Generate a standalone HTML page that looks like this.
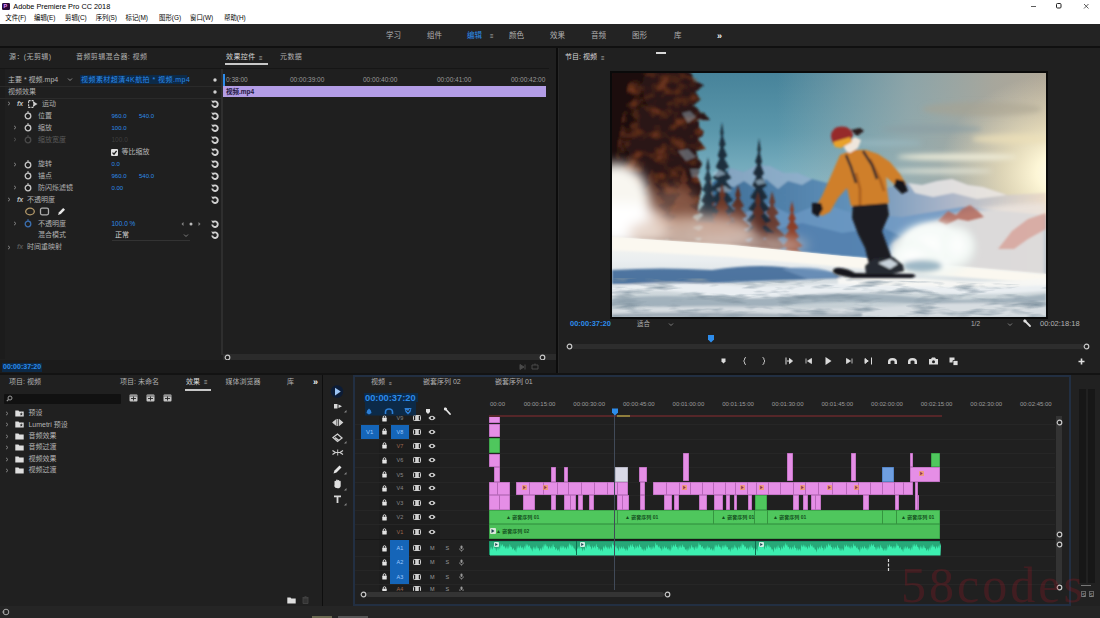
<!DOCTYPE html><html lang="zh-CN"><head><meta charset="utf-8"><title>Adobe Premiere Pro CC 2018</title><style>
*{margin:0;padding:0;box-sizing:border-box}
html,body{width:1100px;height:618px;overflow:hidden;background:#202020}
body{font-family:"Liberation Sans","Noto Sans CJK SC",sans-serif;font-size:7px;color:#b0b0b0;position:relative;line-height:1}
.a{position:absolute;white-space:nowrap}
.t{position:absolute;white-space:nowrap;line-height:10px;height:10px}
.b{color:#2d8ceb}
.d{color:#5a5a5a}
.w{color:#d8d8d8}
svg{position:absolute;overflow:visible}
</style></head><body>
<div class="a" style="left:0px;top:0px;width:1100px;height:24px;background:#ffffff;"></div>
<div class="a" style="left:1.5px;top:2.8px;width:8px;height:7px;background:#2a0a3a;border-radius:1.2px"></div>
<div class="t" style="left:3.600px;top:1.300px;font-size:5.500px;color:#e38cff;font-weight:bold">P</div>
<div class="t " style="left:13.3px;top:1.5px;color:#000;font-size:7.300px">Adobe Premiere Pro CC 2018</div>
<div class="t " style="left:5.3px;top:13.3px;color:#000;font-size:6.400px">文件(F)</div>
<div class="t " style="left:34px;top:13.3px;color:#000;font-size:6.400px">编辑(E)</div>
<div class="t " style="left:65px;top:13.3px;color:#000;font-size:6.400px">剪辑(C)</div>
<div class="t " style="left:95.7px;top:13.3px;color:#000;font-size:6.400px">序列(S)</div>
<div class="t " style="left:125.5px;top:13.3px;color:#000;font-size:6.400px">标记(M)</div>
<div class="t " style="left:159px;top:13.3px;color:#000;font-size:6.400px">图形(G)</div>
<div class="t " style="left:190px;top:13.3px;color:#000;font-size:6.400px">窗口(W)</div>
<div class="t " style="left:224px;top:13.3px;color:#000;font-size:6.400px">帮助(H)</div>
<svg style="left:1020px;top:0" width="80" height="12" viewBox="0 0 80 12"><path d="M11 6.5h5" stroke="#333" stroke-width="0.8" fill="none"/><rect x="36.5" y="3.5" width="4.5" height="4.5" rx="1" stroke="#222" stroke-width="1" fill="none"/><path d="M64 4l4.5 4.5M68.500 4l-4.5 4.500" stroke="#333" stroke-width="0.800" fill="none"/></svg>
<div class="a" style="left:0px;top:24px;width:1100px;height:23px;background:#232323;"></div>
<div class="a" style="left:0px;top:46px;width:1100px;height:1.5px;background:#101010;"></div>
<div class="t " style="left:386px;top:30.5px;font-size:7.5px">学习</div>
<div class="t " style="left:427px;top:30.5px;font-size:7.5px">组件</div>
<div class="t b" style="left:467px;top:30.5px;font-size:7.5px">编辑</div>
<div class="t " style="left:509px;top:30.5px;font-size:7.5px">颜色</div>
<div class="t " style="left:550px;top:30.5px;font-size:7.5px">效果</div>
<div class="t " style="left:591px;top:30.5px;font-size:7.5px">音频</div>
<div class="t " style="left:632px;top:30.5px;font-size:7.5px">图形</div>
<div class="t " style="left:674px;top:30.5px;font-size:7.5px">库</div>
<div class="t " style="left:490px;top:31px;font-size:6px">≡</div>
<div class="t w" style="left:717px;top:30.5px;font-size:9px;font-weight:bold;color:#f0f0f0">»</div>
<div class="a" style="left:0px;top:48px;width:556px;height:326px;background:#1f1f1f;"></div>
<div class="a" style="left:556px;top:48px;width:1.8px;height:326px;background:#0c0c0c;"></div>
<div class="a" style="left:557.8px;top:48px;width:1px;height:326px;background:#282828;"></div>
<div class="a" style="left:0px;top:69px;width:5px;height:290px;background:#1c1c1c;"></div>
<div class="t " style="left:9px;top:52px;font-size:7px;letter-spacing:0.400px">源：(无剪辑)</div>
<div class="t " style="left:76px;top:52px;font-size:7px;letter-spacing:0.400px">音频剪辑混合器: 视频</div>
<div class="t w" style="left:226px;top:52px;font-size:7px;letter-spacing:0.400px">效果控件</div>
<div class="t " style="left:259px;top:52.5px;font-size:6px">≡</div>
<div class="a" style="left:225px;top:63px;width:43px;height:1.5px;background:#c8c8c8;"></div>
<div class="t " style="left:280px;top:52px;font-size:7px;letter-spacing:0.400px">元数据</div>
<div class="a" style="left:0px;top:68px;width:549px;height:1px;background:#161616;"></div>
<div class="t " style="left:8px;top:74.5px;font-size:7px;color:#b8b8b8">主要 * 视频.mp4</div>
<svg style="left:67px;top:77px" width="6" height="5" viewBox="0 0 6 5"><path d="M1 1.500l2 2 2-2" stroke="#999" stroke-width="0.900" fill="none"/></svg>
<div class="a" style="left:80px;top:75px;width:107px;height:9px;background:#0c2a48;"></div>
<div class="t b" style="left:81px;top:74.5px;font-size:7px;letter-spacing:0.45px">视频素材超清4K航拍 * 视频.mp4</div>
<div class="t " style="left:8px;top:86.5px;font-size:7px;color:#b0b0b0">视频效果</div>
<div class="a" style="left:0px;top:85.5px;width:222px;height:0.8px;background:#2a2a2a;"></div>
<div class="a" style="left:0px;top:97.5px;width:222px;height:0.8px;background:#2a2a2a;"></div>
<div class="a" style="left:221px;top:69px;width:2px;height:286px;background:#2e2e2e;"></div>
<div class="a" style="left:223px;top:69px;width:333px;height:286px;background:#1f1f1f;"></div>
<div class="t " style="left:224px;top:74.5px;font-size:6.5px;color:#9a9a9a;left:226px">0:38:00</div>
<div class="t " style="left:290px;top:74.5px;font-size:6.5px;color:#9a9a9a">00:00:39:00</div>
<div class="t " style="left:363px;top:74.5px;font-size:6.5px;color:#9a9a9a">00:00:40:00</div>
<div class="t " style="left:437px;top:74.5px;font-size:6.5px;color:#9a9a9a">00:00:41:00</div>
<div class="t " style="left:511px;top:74.5px;font-size:6.5px;color:#9a9a9a">00:00:42:00</div>
<div class="a" style="left:223px;top:74px;width:1.5px;height:12px;background:#2d8ceb;"></div>
<div class="a" style="left:223px;top:86px;width:323px;height:11px;background:#b39de6;"></div>
<div class="t " style="left:226px;top:86.5px;font-size:6.5px;color:#1c143c;font-weight:bold">视频.mp4</div>
<svg style="left:212px;top:76.5px" width="6" height="6"><circle cx="3" cy="3" r="1.700" fill="#d0d0d0"/></svg>
<svg style="left:212px;top:88.5px" width="6" height="6"><circle cx="3" cy="3" r="1.700" fill="#d0d0d0"/></svg>
<svg style="left:211px;top:99.7px" width="8" height="8" viewBox="0 0 8 8"><path d="M2 2.200A2.800 2.800 0 1 1 1.200 4.500" stroke="#d0d0d0" stroke-width="1.900" fill="none"/><path d="M0.200 0.600l3.200 0.300-1.300 2.700z" fill="#d0d0d0"/></svg>
<svg style="left:211px;top:111.7px" width="8" height="8" viewBox="0 0 8 8"><path d="M2 2.200A2.800 2.800 0 1 1 1.200 4.500" stroke="#d0d0d0" stroke-width="1.900" fill="none"/><path d="M0.200 0.600l3.200 0.300-1.300 2.700z" fill="#d0d0d0"/></svg>
<svg style="left:211px;top:123.8px" width="8" height="8" viewBox="0 0 8 8"><path d="M2 2.200A2.800 2.800 0 1 1 1.200 4.500" stroke="#d0d0d0" stroke-width="1.900" fill="none"/><path d="M0.200 0.600l3.200 0.300-1.300 2.700z" fill="#d0d0d0"/></svg>
<svg style="left:211px;top:135.6px" width="8" height="8" viewBox="0 0 8 8"><path d="M2 2.200A2.800 2.800 0 1 1 1.200 4.500" stroke="#d0d0d0" stroke-width="1.900" fill="none"/><path d="M0.200 0.600l3.200 0.300-1.300 2.700z" fill="#d0d0d0"/></svg>
<svg style="left:211px;top:148.2px" width="8" height="8" viewBox="0 0 8 8"><path d="M2 2.200A2.800 2.800 0 1 1 1.200 4.500" stroke="#d0d0d0" stroke-width="1.900" fill="none"/><path d="M0.200 0.600l3.200 0.300-1.300 2.700z" fill="#d0d0d0"/></svg>
<svg style="left:211px;top:160px" width="8" height="8" viewBox="0 0 8 8"><path d="M2 2.200A2.800 2.800 0 1 1 1.200 4.500" stroke="#d0d0d0" stroke-width="1.900" fill="none"/><path d="M0.200 0.600l3.200 0.300-1.300 2.700z" fill="#d0d0d0"/></svg>
<svg style="left:211px;top:171.9px" width="8" height="8" viewBox="0 0 8 8"><path d="M2 2.200A2.800 2.800 0 1 1 1.200 4.500" stroke="#d0d0d0" stroke-width="1.900" fill="none"/><path d="M0.200 0.600l3.200 0.300-1.300 2.700z" fill="#d0d0d0"/></svg>
<svg style="left:211px;top:183.8px" width="8" height="8" viewBox="0 0 8 8"><path d="M2 2.200A2.800 2.800 0 1 1 1.200 4.500" stroke="#d0d0d0" stroke-width="1.900" fill="none"/><path d="M0.200 0.600l3.200 0.300-1.300 2.700z" fill="#d0d0d0"/></svg>
<svg style="left:211px;top:195.7px" width="8" height="8" viewBox="0 0 8 8"><path d="M2 2.200A2.800 2.800 0 1 1 1.200 4.500" stroke="#d0d0d0" stroke-width="1.900" fill="none"/><path d="M0.200 0.600l3.200 0.300-1.300 2.700z" fill="#d0d0d0"/></svg>
<svg style="left:211px;top:219.5px" width="8" height="8" viewBox="0 0 8 8"><path d="M2 2.200A2.800 2.800 0 1 1 1.200 4.500" stroke="#d0d0d0" stroke-width="1.900" fill="none"/><path d="M0.200 0.600l3.200 0.300-1.300 2.700z" fill="#d0d0d0"/></svg>
<svg style="left:211px;top:231.4px" width="8" height="8" viewBox="0 0 8 8"><path d="M2 2.200A2.800 2.800 0 1 1 1.200 4.500" stroke="#d0d0d0" stroke-width="1.900" fill="none"/><path d="M0.200 0.600l3.200 0.300-1.300 2.700z" fill="#d0d0d0"/></svg>
<svg style="left:7px;top:101.2px" width="4" height="5" viewBox="0 0 4 5"><path d="M1 0.800l2 1.700-2 1.700" stroke="#8a8a8a" stroke-width="0.900" fill="none"/></svg>
<div class="t " style="left:17px;top:98.7px;font-size:7px;font-style:italic;font-weight:bold;color:#c0c0c0">fx</div>
<svg style="left:28px;top:99.7px" width="10" height="8" viewBox="0 0 10 8"><rect x="0.600" y="0.600" width="5" height="6.800" stroke="#d0d0d0" stroke-width="1.100" fill="none" stroke-dasharray="2 1"/><path d="M5.500 1.500L9.500 4 5.500 6.500z" fill="#d0d0d0"/></svg>
<div class="t " style="left:42px;top:98.7px;color:#b0b0b0">运动</div>
<svg style="left:23.5px;top:111.2px" width="8" height="9" viewBox="0 0 8 9"><circle cx="4" cy="5" r="2.800" stroke="#c8c8c8" stroke-width="1.300" fill="none"/><path d="M3 1h2" stroke="#c8c8c8" stroke-width="1.100"/></svg>
<div class="t " style="left:38px;top:110.7px;">位置</div>
<div class="t b" style="left:111.5px;top:110.7px;font-size:6px">960.0</div>
<div class="t b" style="left:139px;top:110.7px;font-size:6px">540.0</div>
<svg style="left:13px;top:125.3px" width="4" height="5" viewBox="0 0 4 5"><path d="M1 0.800l2 1.700-2 1.700" stroke="#8a8a8a" stroke-width="0.900" fill="none"/></svg>
<svg style="left:23.5px;top:123.3px" width="8" height="9" viewBox="0 0 8 9"><circle cx="4" cy="5" r="2.800" stroke="#c8c8c8" stroke-width="1.300" fill="none"/><path d="M3 1h2" stroke="#c8c8c8" stroke-width="1.100"/></svg>
<div class="t " style="left:38px;top:122.8px;">缩放</div>
<div class="t b" style="left:111.5px;top:122.8px;font-size:6px">100.0</div>
<svg style="left:13px;top:137.1px" width="4" height="5" viewBox="0 0 4 5"><path d="M1 0.800l2 1.700-2 1.700" stroke="#555" stroke-width="0.900" fill="none"/></svg>
<svg style="left:23.5px;top:135.1px" width="8" height="9" viewBox="0 0 8 9"><circle cx="4" cy="5" r="2.800" stroke="#4a4a4a" stroke-width="1.300" fill="none"/><path d="M3 1h2" stroke="#4a4a4a" stroke-width="1.100"/></svg>
<div class="t d" style="left:38px;top:134.6px;">缩放宽度</div>
<div class="t " style="left:111.5px;top:134.6px;font-size:6.5px;color:#3e3e3e">100.0</div>
<div class="a" style="left:111px;top:148.7px;width:7px;height:7px;background:#e0e0e0;border-radius:1px"></div>
<svg style="left:111px;top:148.7px" width="7" height="7" viewBox="0 0 7 7"><path d="M1.500 3.600l1.500 1.600 2.600-3.400" stroke="#1a1a1a" stroke-width="1.300" fill="none"/></svg>
<div class="t " style="left:121.5px;top:147.2px;color:#b8b8b8">等比缩放</div>
<svg style="left:13px;top:161.5px" width="4" height="5" viewBox="0 0 4 5"><path d="M1 0.800l2 1.700-2 1.700" stroke="#8a8a8a" stroke-width="0.900" fill="none"/></svg>
<svg style="left:23.5px;top:159.5px" width="8" height="9" viewBox="0 0 8 9"><circle cx="4" cy="5" r="2.800" stroke="#c8c8c8" stroke-width="1.300" fill="none"/><path d="M3 1h2" stroke="#c8c8c8" stroke-width="1.100"/></svg>
<div class="t " style="left:38px;top:159px;">旋转</div>
<div class="t b" style="left:111.5px;top:159px;font-size:6px">0.0</div>
<svg style="left:23.5px;top:171.4px" width="8" height="9" viewBox="0 0 8 9"><circle cx="4" cy="5" r="2.800" stroke="#c8c8c8" stroke-width="1.300" fill="none"/><path d="M3 1h2" stroke="#c8c8c8" stroke-width="1.100"/></svg>
<div class="t " style="left:38px;top:170.9px;">锚点</div>
<div class="t b" style="left:111.5px;top:170.9px;font-size:6px">960.0</div>
<div class="t b" style="left:139px;top:170.9px;font-size:6px">540.0</div>
<svg style="left:13px;top:185.3px" width="4" height="5" viewBox="0 0 4 5"><path d="M1 0.800l2 1.700-2 1.700" stroke="#8a8a8a" stroke-width="0.900" fill="none"/></svg>
<svg style="left:23.5px;top:183.3px" width="8" height="9" viewBox="0 0 8 9"><circle cx="4" cy="5" r="2.800" stroke="#c8c8c8" stroke-width="1.300" fill="none"/><path d="M3 1h2" stroke="#c8c8c8" stroke-width="1.100"/></svg>
<div class="t " style="left:38px;top:182.8px;">防闪烁滤镜</div>
<div class="t b" style="left:111.5px;top:182.8px;font-size:6px">0.00</div>
<svg style="left:7px;top:197.2px" width="4" height="5" viewBox="0 0 4 5"><path d="M1 0.800l2 1.700-2 1.700" stroke="#8a8a8a" stroke-width="0.900" fill="none"/></svg>
<div class="t " style="left:17px;top:194.7px;font-size:7px;font-style:italic;font-weight:bold;color:#c0c0c0">fx</div>
<div class="t " style="left:27px;top:194.7px;color:#b0b0b0">不透明度</div>
<svg style="left:24px;top:207.0px" width="46" height="9" viewBox="0 0 46 9"><ellipse cx="6" cy="4.500" rx="4.300" ry="3.300" stroke="#b49a6a" stroke-width="1.300" fill="none"/><rect x="16.500" y="1.200" width="8" height="6.600" rx="1.500" stroke="#b0b0b0" stroke-width="1.300" fill="none"/><path d="M34 8l1-2.800 4.200-4.200 1.800 1.800-4.200 4.200z" fill="#e8e8e8"/></svg>
<svg style="left:13px;top:221.0px" width="4" height="5" viewBox="0 0 4 5"><path d="M1 0.800l2 1.700-2 1.700" stroke="#8a8a8a" stroke-width="0.900" fill="none"/></svg>
<svg style="left:23.5px;top:219.0px" width="8" height="9" viewBox="0 0 8 9"><circle cx="4" cy="5" r="2.800" stroke="#3b6fb0" stroke-width="1.300" fill="none"/><path d="M3 1h2" stroke="#3b6fb0" stroke-width="1.100"/></svg>
<div class="t " style="left:38px;top:218.5px;">不透明度</div>
<div class="t b" style="left:111.5px;top:218.5px;font-size:6.500px">100.0 %</div>
<svg style="left:180px;top:220.5px" width="24" height="6" viewBox="0 0 24 6"><path d="M3.500 1L1.500 3l2 2z" fill="#888"/><circle cx="11" cy="3" r="1.500" fill="#bbb"/><path d="M18.500 1l2 2-2 2z" fill="#888"/></svg>
<div class="t " style="left:38px;top:230.4px;">混合模式</div>
<div class="t w" style="left:115px;top:230.4px;">正常</div>
<div class="a" style="left:112px;top:239.9px;width:78px;height:0.8px;background:#333;"></div>
<svg style="left:183px;top:233.4px" width="6" height="5" viewBox="0 0 6 5"><path d="M1 1.500l2 2 2-2" stroke="#888" stroke-width="0.900" fill="none"/></svg>
<svg style="left:7px;top:244.8px" width="4" height="5" viewBox="0 0 4 5"><path d="M1 0.800l2 1.700-2 1.700" stroke="#8a8a8a" stroke-width="0.900" fill="none"/></svg>
<div class="t " style="left:17px;top:242.3px;font-size:7px;font-style:italic;font-weight:bold;color:#555">fx</div>
<div class="t " style="left:27px;top:242.3px;">时间重映射</div>
<div class="a" style="left:223px;top:354px;width:333px;height:6px;background:#2b2b2b;"></div>
<svg style="left:223.5px;top:353.5px" width="7" height="7"><circle cx="3.500" cy="3.500" r="2.300" stroke="#c8c8c8" stroke-width="1.200" fill="#1b1b1b"/></svg>
<svg style="left:539.0px;top:353.5px" width="7" height="7"><circle cx="3.500" cy="3.500" r="2.300" stroke="#c8c8c8" stroke-width="1.200" fill="#1b1b1b"/></svg>
<div class="a" style="left:0px;top:360px;width:556px;height:13px;background:#1b1b1b;z-index:0"></div>
<div class="a" style="left:0px;top:372.8px;width:1100px;height:1.8px;background:#131313;"></div>
<div class="a" style="left:2px;top:362.5px;width:40px;height:9px;background:#0c2a48;"></div>
<div class="t b" style="left:3px;top:362px;font-size:7px;font-weight:bold">00:00:37:20</div>
<svg style="left:518px;top:363px" width="24" height="8" viewBox="0 0 24 8"><path d="M2 1.500l4 2.500-4 2.500zM7 1.500v5" stroke="#4a4a4a" stroke-width="1" fill="#4a4a4a"/><path d="M14 2h6v4h-6zM17 2v-1.500" stroke="#4a4a4a" stroke-width="1" fill="none"/></svg>
<div class="a" style="left:559px;top:48px;width:541px;height:325px;background:#202020;"></div>
<div class="t w" style="left:565px;top:52px;font-size:7px">节目: 视频</div>
<div class="t " style="left:601px;top:52.5px;font-size:6px">≡</div>
<div class="a" style="left:656px;top:52px;width:10px;height:1.5px;background:#d8d8d8;"></div>
<div class="a" style="left:609.5px;top:70.5px;width:438px;height:248px;background:#0a0a0a;"></div>
<svg style="left:611.600px;top:72.500px;overflow:hidden" width="434" height="244" viewBox="0 0 434 244">
<defs>
<linearGradient id="sky" x1="0" y1="0" x2="0" y2="1"><stop offset="0" stop-color="#47839a"/><stop offset="0.250" stop-color="#5c98ac"/><stop offset="0.450" stop-color="#80b4c4"/><stop offset="0.650" stop-color="#9ccad4"/><stop offset="1" stop-color="#a8cfd6"/></linearGradient>
<linearGradient id="skyr" x1="0" y1="0" x2="1" y2="0"><stop offset="0.380" stop-color="#a4b4b4" stop-opacity="0"/><stop offset="0.680" stop-color="#a2aeac" stop-opacity="0.750"/><stop offset="0.880" stop-color="#aca89c" stop-opacity="0.950"/><stop offset="1" stop-color="#b0a898"/></linearGradient>
<radialGradient id="sun" cx="452" cy="100" r="125" gradientUnits="userSpaceOnUse" gradientTransform="translate(452 100) scale(1 0.800) translate(-452 -100)"><stop offset="0" stop-color="#fffdf4"/><stop offset="0.220" stop-color="#fff8d8" stop-opacity="0.980"/><stop offset="0.500" stop-color="#f8ecc4" stop-opacity="0.650"/><stop offset="1" stop-color="#ece0c0" stop-opacity="0"/></radialGradient>
<linearGradient id="mtn" x1="0" y1="0" x2="1" y2="0"><stop offset="0" stop-color="#3f6f98"/><stop offset="0.400" stop-color="#5f8fb8"/><stop offset="0.700" stop-color="#a9b4c8"/><stop offset="1" stop-color="#ecdcc8"/></linearGradient>
<linearGradient id="snow" x1="0" y1="0" x2="0" y2="1"><stop offset="0" stop-color="#f8f6f0"/><stop offset="0.300" stop-color="#eaeef0"/><stop offset="0.650" stop-color="#d2dade"/><stop offset="1" stop-color="#bcc8ce"/></linearGradient>
<radialGradient id="puff" cx="0.500" cy="0.500" r="0.500"><stop offset="0" stop-color="#ffffff"/><stop offset="0.600" stop-color="#f6fbf8" stop-opacity="0.920"/><stop offset="1" stop-color="#eaf4f0" stop-opacity="0"/></radialGradient>
<filter id="b1" x="-20%" y="-20%" width="140%" height="140%"><feGaussianBlur stdDeviation="0.800"/></filter>
<filter id="b2" x="-20%" y="-20%" width="140%" height="140%"><feGaussianBlur stdDeviation="2.500"/></filter>
<filter id="b5" x="-30%" y="-30%" width="160%" height="160%"><feGaussianBlur stdDeviation="6"/></filter>
<filter id="rough" x="-10%" y="-10%" width="120%" height="120%"><feTurbulence type="fractalNoise" baseFrequency="0.090" numOctaves="2" seed="3" result="n"/><feDisplacementMap in="SourceGraphic" in2="n" scale="9" xChannelSelector="R" yChannelSelector="G"/><feGaussianBlur stdDeviation="0.700"/></filter>
<filter id="snowtex" color-interpolation-filters="sRGB" x="0" y="0" width="100%" height="100%"><feTurbulence type="fractalNoise" baseFrequency="0.030 0.140" numOctaves="3" seed="5"/><feColorMatrix type="matrix" values="0 0 0 0 0.520  0 0 0 0 0.590  0 0 0 0 0.640  2.400 0 0 0 -1.150"/><feGaussianBlur stdDeviation="0.600"/></filter>
<filter id="treetex" color-interpolation-filters="sRGB" x="0" y="0" width="100%" height="100%"><feTurbulence type="fractalNoise" baseFrequency="0.070 0.090" numOctaves="3" seed="11"/><feColorMatrix type="matrix" values="0 0 0 0 0.440  0 0 0 0 0.210  0 0 0 0 0.110  3.200 0 0 0 -1.450"/><feGaussianBlur stdDeviation="0.800"/></filter>
<clipPath id="snowclip"><path d="M0 205L230 206 434 212V244H0z"/></clipPath>
<clipPath id="treeclip"><path d="M18 0h52l14 6 8 8-10 6 8 6-12 6 14 8 4 8-14 0 10 12-6 6 8 10-10 2 6 14-4 10 4 14-6 20-60 6-20-60z"/></clipPath>
</defs>
<rect width="434" height="244" fill="url(#sky)"/>
<rect width="434" height="244" fill="url(#skyr)"/>
<rect width="434" height="244" fill="url(#sun)"/>
<!-- clouds -->
<g filter="url(#b2)">
<ellipse cx="320" cy="56" rx="50" ry="4" fill="#8a9ea4" opacity="0.700"/>
<ellipse cx="370" cy="36" rx="60" ry="7" fill="#a8a290" opacity="0.500"/>
<ellipse cx="345" cy="84" rx="60" ry="3.500" fill="#f2f0dc" opacity="0.850"/>
<ellipse cx="330" cy="98" rx="50" ry="2.500" fill="#f2f2e2" opacity="0.700"/>
<ellipse cx="270" cy="70" rx="40" ry="3" fill="#9cbcc4" opacity="0.600"/>
<ellipse cx="400" cy="66" rx="40" ry="5" fill="#ecdfb8" opacity="0.700"/>
</g>
<!-- distant mountains -->
<g filter="url(#b1)">
<path d="M100 110L118 95 132 99 145 92 158 93 172 100 186 100 200 106 215 110 240 112 270 116 296 110 310 112 325 108 340 106 356 112 371 114 395 122 434 120V210H100z" fill="url(#mtn)"/>
<path d="M118 95l14 4 13-7 13 1 14 7 14 0 14 6-10 6-14-4-10 8-12-10-10 10-12-8-10 6-14-2z" fill="#d4e2ee" opacity="0.450"/>
<path d="M296 110l14 2 15-4 15-2 16 6 15 2 24 8-30 4-24-6-20 4-18-4z" fill="#f2ece6" opacity="0.750"/>
<path d="M120 150l30-22 30 14 30-12 30 10 50 4 60-10 84 8v60H120z" fill="#6c98c4" opacity="0.750"/>
<path d="M150 160l40-10 40 10 40-6 20 10-30 20H150z" fill="#4a78a8" opacity="0.650"/>
</g>
<path d="M280 170q60-40 154-40v80H280z" fill="#ece4de" opacity="0.850" filter="url(#b2)"/>
<!-- pink rocks right -->
<g filter="url(#b1)"><path d="M326 148l10-10 8 4 6-6 8-4 8 6 6 6-16 4-10-2-12 6z" fill="#b46a5c" opacity="0.850"/><path d="M386 176l14-18 16-12 18-6v16l-18 10-14 10z" fill="#d69488" opacity="0.650"/></g>
<!-- big trees left -->
<g filter="url(#b1)">
<g filter="url(#rough)"><path d="M-10 -10h80l14 16 8 8-10 6 8 6-12 6 14 8 4 8-14 0 10 12-6 6 8 10-10 2 6 14-4 10 4 14-6 20-10 30H-10z" fill="#2c1812"/>
<path d="M0 -10h40l-14 24 10 16-16 10 8 20-16 12 6 20-10 8H-10z" fill="#1a100d" opacity="0.900"/></g>
<g clip-path="url(#treeclip)"><rect x="0" y="0" width="110" height="170" filter="url(#treetex)"/></g>
<path d="M70 40l8-2 6 6-8 6zM66 78l10-2 8 8-10 4zM78 96l8 0 2 8-8 0z" fill="#9cb4c4" opacity="0.450"/>
<path d="M40.0 96.0L43.9 107.1L41.9 109.9L48.2 118.2L43.8 121.0L53.2 129.4L45.7 132.2L54.5 140.5L47.6 143.3L59.7 151.6L49.6 154.4L69.3 162.8L51.5 165.5L72.8 173.9L53.4 176.7L75.4 185.0L9.6 185.0L26.6 176.7L10.5 173.9L28.5 165.5L14.7 162.8L30.4 154.4L20.4 151.6L32.4 143.3L21.3 140.5L34.3 132.2L28.9 129.4L36.2 121.0L31.2 118.2L38.1 109.9L35.7 107.1z" fill="#4a2218" opacity="0.95"/>
<path d="M72.0 96.0L75.9 107.1L73.7 109.9L79.6 118.2L75.4 121.0L83.8 129.4L77.1 132.2L88.2 140.5L78.8 143.3L89.6 151.6L80.4 154.4L97.0 162.8L82.1 165.5L100.0 173.9L83.8 176.7L103.9 185.0L38.2 185.0L60.2 176.7L42.8 173.9L61.9 165.5L49.7 162.8L63.6 154.4L55.9 151.6L65.2 143.3L56.6 140.5L66.9 132.2L62.2 129.4L68.6 121.0L64.0 118.2L70.3 109.9L67.8 107.1z" fill="#5a2a1c" opacity="0.95"/>
<path d="M98.0 106.0L101.3 117.3L99.5 120.1L104.7 128.6L101.1 131.4L109.5 139.9L102.6 142.7L110.2 151.1L104.2 154.0L117.5 162.4L105.7 165.3L119.4 173.7L107.3 176.5L122.1 185.0L74.8 185.0L88.7 176.5L78.7 173.7L90.3 165.3L81.2 162.4L91.8 154.0L85.5 151.1L93.4 142.7L89.0 139.9L94.9 131.4L90.2 128.6L96.5 120.1L94.3 117.3z" fill="#6a3220" opacity="0.95"/>
<path d="M126.0 112.0L128.7 122.4L127.3 125.0L131.9 132.9L128.6 135.5L135.0 143.3L129.9 145.9L138.7 153.7L131.1 156.3L141.0 164.1L132.4 166.8L145.0 174.6L133.7 177.2L148.4 185.0L105.6 185.0L118.3 177.2L106.5 174.6L119.6 166.8L113.2 164.1L120.9 156.3L112.9 153.7L122.1 145.9L116.3 143.3L123.4 135.5L119.6 132.9L124.7 125.0L123.1 122.4z" fill="#5c2c20" opacity="0.95"/>
<path d="M160.0 118.0L163.2 129.2L161.3 132.0L166.6 140.3L162.7 143.1L168.4 151.5L164.1 154.3L173.3 162.7L165.4 165.5L173.1 173.8L166.8 176.6L177.5 185.0L143.9 185.0L153.2 176.6L143.6 173.8L154.6 165.5L146.2 162.7L155.9 154.3L152.2 151.5L157.3 143.1L153.9 140.3L158.7 132.0L157.3 129.2z" fill="#6a3424" opacity="0.9"/>
<path d="M110.0 49.0L111.6 60.2L110.8 63.0L113.7 71.4L111.5 74.2L115.2 82.7L112.2 85.5L117.1 93.9L113.0 96.7L119.3 105.1L113.8 107.9L120.0 116.3L114.5 119.1L121.0 127.6L115.2 130.4L123.7 138.8L116.0 141.6L123.6 150.0L95.4 150.0L104.0 141.6L98.5 138.8L104.8 130.4L99.8 127.6L105.5 119.1L98.5 116.3L106.2 107.9L100.5 105.1L107.0 96.7L103.7 93.9L107.8 85.5L105.7 82.7L108.5 74.2L107.1 71.4L109.2 63.0L108.2 60.2z" fill="#1a2e3c" opacity="1"/>
<path d="M147.0 65.0L148.8 76.9L147.8 79.8L150.0 88.8L148.6 91.7L152.0 100.6L149.4 103.6L154.8 112.5L150.2 115.5L155.6 124.4L150.9 127.3L158.0 136.2L151.7 139.2L159.5 148.1L152.5 151.1L162.9 160.0L133.0 160.0L141.5 151.1L134.3 148.1L142.3 139.2L136.2 136.2L143.1 127.3L138.2 124.4L143.8 115.5L140.3 112.5L144.6 103.6L141.0 100.6L145.4 91.7L143.1 88.8L146.2 79.8L145.4 76.9z" fill="#1a2c38" opacity="1"/>
<path d="M96.0 84.0L98.0 95.0L96.9 97.8L99.7 106.0L97.8 108.8L102.9 117.0L98.7 119.8L104.1 128.0L99.6 130.8L105.7 139.0L100.5 141.8L106.3 150.0L83.6 150.0L91.5 141.8L85.8 139.0L92.4 130.8L89.2 128.0L93.3 119.8L90.0 117.0L94.2 108.8L92.2 106.0L95.1 97.8L93.9 95.0z" fill="#1f3442" opacity="0.95"/>
<path d="M100 100l8-3 6 4-9 3zM104 116l9-3 7 5-11 2zM143 108l6-2 5 4-8 2z" fill="#b8d0e4" opacity="0.600"/>
<path d="M110.0 110.0L113.3 122.5L111.4 125.6L116.6 135.0L112.8 138.1L120.0 147.5L114.3 150.6L123.5 160.0L115.7 163.1L123.6 172.5L117.1 175.6L130.0 185.0L88.4 185.0L102.9 175.6L96.3 172.5L104.3 163.1L96.4 160.0L105.7 150.6L100.9 147.5L107.2 138.1L103.7 135.0L108.6 125.6L107.3 122.5z" fill="#6e3624" opacity="0.92"/>
<path d="M146.0 118.0L148.6 129.2L147.3 132.0L151.8 140.3L148.6 143.1L154.2 151.5L149.8 154.3L156.9 162.7L151.1 165.5L159.3 173.8L152.4 176.6L164.4 185.0L131.4 185.0L139.6 176.6L132.4 173.8L140.9 165.5L134.3 162.7L142.2 154.3L138.0 151.5L143.4 143.1L140.6 140.3L144.7 132.0L143.2 129.2z" fill="#5e3024" opacity="0.92"/>
<path d="M180.0 128.0L182.0 137.0L180.9 139.2L183.8 146.0L181.8 148.2L186.5 155.0L182.7 157.2L187.2 164.0L183.6 166.2L190.6 173.0L184.5 175.2L191.4 182.0L168.6 182.0L175.5 175.2L171.2 173.0L176.4 166.2L172.2 164.0L177.3 157.2L174.5 155.0L178.2 148.2L176.3 146.0L179.1 139.2L177.9 137.0z" fill="#8a3c28" opacity="1"/>
</g>
<!-- mist over trees -->
<g filter="url(#b5)">
<ellipse cx="4" cy="128" rx="34" ry="38" fill="#f8f6f0"/>
<ellipse cx="10" cy="152" rx="48" ry="22" fill="#ffffff" opacity="0.950"/>
<ellipse cx="80" cy="160" rx="64" ry="17" fill="#e2cec2" opacity="0.800"/>
<ellipse cx="140" cy="172" rx="56" ry="10" fill="#dccbc4" opacity="0.600"/>
<ellipse cx="62" cy="135" rx="26" ry="22" fill="#c89880" opacity="0.400"/>
<ellipse cx="110" cy="150" rx="30" ry="14" fill="#c8a090" opacity="0.350"/>
</g>
<!-- snow ground -->
<path d="M0 164L120 172 230 183 434 201V244H0z" fill="url(#snow)"/>
<path d="M0 164L120 172 230 183 434 201V211L230 194 120 184 0 177z" fill="#fbf8f0" filter="url(#b1)"/>
<g filter="url(#b1)">
<path d="M0 197q50-3 100 0 40-6 70-3t50 5l10 6q-40 2-80 3-80 4-150 3z" fill="#3f6898" opacity="0.900"/>
<path d="M170 196q30-4 50 3l6 5-30 2z" fill="#6f94bc" opacity="0.800"/>
<path d="M0 213q50-6 100-2t110 0 120 2 104-4v9q-60 5-120 2t-120 3-110-2-84 2z" fill="#eef2f6" opacity="0.850"/>
<path d="M0 226q40-5 90-2t100-2 110 2 134-3v7q-70 5-140 2t-130 3-164-2z" fill="#8e9fae" opacity="0.650"/>
<path d="M226 205q60-2 104 2t104-2v7q-50 3-100 2t-108-3z" fill="#f8f8f4" opacity="0.950"/>
<path d="M0 236q80-5 160-2t140-2 134 0v12H0z" fill="#dde2e6" opacity="0.750"/>
<path d="M0 241q60-3 130-1t120 0v4H0z" fill="#8c9aa6" opacity="0.700"/>
</g>
<g clip-path="url(#snowclip)"><rect x="0" y="200" width="434" height="44" filter="url(#snowtex)"/></g>
<!-- spray -->
<g filter="url(#b2)">
<ellipse cx="322" cy="176" rx="46" ry="32" fill="url(#puff)"/><ellipse cx="320" cy="172" rx="30" ry="22" fill="#ffffff" opacity="0.850"/>
<ellipse cx="318" cy="172" rx="34" ry="24" fill="url(#puff)"/>
<ellipse cx="300" cy="184" rx="28" ry="18" fill="url(#puff)"/>
<ellipse cx="346" cy="172" rx="20" ry="22" fill="url(#puff)" opacity="0.850"/>
<ellipse cx="310" cy="193" rx="20" ry="6" fill="#7fa0b4" opacity="0.750"/>
</g>
<!-- snowboarder -->
<g filter="url(#b1)">
<path d="M221 197q2-3 8-2 8 1 14 5l58 1 3 2-4 2h-60l-14-3q-6-2-5-5z" fill="#14161a"/>
<path d="M241 129l34-1 2 14-7 16 5 14 6 16-24 3-4-16-7-14-6-16z" fill="#1b1e24"/>
<path d="M253 193l8-7 20-2 10 8 1 6-12 3h-26z" fill="#262a30"/>
<path d="M266 190l12-4 8 5-8 5z" fill="#c8d2da"/>
<path d="M228 82l12-5 14 0 12 4 12 8 10 12 6 10-6 5-14-12 1 12 2 14-38 3-4-18-9 10-8 14-8 4-8-6 8-14 8-18z" fill="#cf7f2c"/>
<path d="M244 100l4 16 0 16M258 86l10 20 4 12" stroke="#a0561c" stroke-width="2.500" fill="none" opacity="0.800"/>
<path d="M234 82l5 12 5 16M251 78l9 14 5 14" stroke="#2a2a2e" stroke-width="2.400" fill="none"/>
<path d="M200 130l9 0 2 6-5 8-6-4z" fill="#15161a"/>
<path d="M284 106l8 2 4 10-6 3-8-8z" fill="#15161a"/>
<path d="M232 72q0 6 6 8l8-5 3-8-6-3z" fill="#efe6dc"/>
<path d="M219 64q0-10 10-10.500t12 8.500l-2 6-18 3z" fill="#962c2c"/>
<path d="M221 69l17-5 2 5-11 6-6-1z" fill="#e8a22a"/>
<path d="M239 57l9-2 4 3-7 5z" fill="#2a1c1c"/>
</g>
</svg>

<div class="t b" style="left:570px;top:318.5px;font-size:7.5px;font-weight:bold">00:00:37:20</div>
<div class="t " style="left:637px;top:318.5px;font-size:6.5px">适合</div>
<svg style="left:668px;top:321.500px" width="6" height="5" viewBox="0 0 6 5"><path d="M1 1.500l2 2 2-2" stroke="#888" stroke-width="0.900" fill="none"/></svg>
<div class="t " style="left:971px;top:318.5px;font-size:6.5px">1/2</div>
<svg style="left:1007px;top:321.500px" width="6" height="5" viewBox="0 0 6 5"><path d="M1 1.500l2 2 2-2" stroke="#888" stroke-width="0.900" fill="none"/></svg>
<svg style="left:1023px;top:319px" width="9" height="9" viewBox="0 0 9 9"><path d="M1.500 1.500l5.500 5.500" stroke="#e0e0e0" stroke-width="1.800" stroke-linecap="round"/><circle cx="2" cy="2" r="1.600" fill="#e0e0e0"/></svg>
<div class="t " style="left:1040px;top:318.5px;font-size:7.5px;color:#b4b4b4">00:02:18:18</div>
<svg style="left:707px;top:334px" width="8" height="9" viewBox="0 0 8 9"><path d="M1 1h6v4.500l-3 3-3-3z" fill="#2d8ceb"/></svg>
<div class="a" style="left:572px;top:344.3px;width:512px;height:4.5px;background:#2d2d2d;border-radius:2px"></div>
<svg style="left:565.5px;top:343.0px" width="7" height="7"><circle cx="3.500" cy="3.500" r="2.300" stroke="#c8c8c8" stroke-width="1.200" fill="#202020"/></svg>
<svg style="left:1083.0px;top:343.0px" width="7" height="7"><circle cx="3.500" cy="3.500" r="2.300" stroke="#c8c8c8" stroke-width="1.200" fill="#202020"/></svg>
<svg style="left:715px;top:355px" width="250" height="12" viewBox="715 355 250 12" fill="#dcdcdc" stroke="none"><path d="M721.500 358.500h4v3l-2 2-2-2z"/><path d="M746 357.500q-1.500 0-1.500 1.500v1l-1 1 1 1v1q0 1.500 1.500 1.500" stroke="#cfcfcf" stroke-width="0.900" fill="none"/><path d="M762.500 357.500q1.500 0 1.500 1.500v1l1 1-1 1v1q0 1.500-1.500 1.500" stroke="#cfcfcf" stroke-width="0.900" fill="none"/><path d="M786 357.500v7M787 361h2M789.500 358.500l3 2.500-3 2.500z" stroke="#dcdcdc" stroke-width="1"/><path d="M806 358.500v5M811.500 358.500v5l-4-2.500z" stroke="#dcdcdc" stroke-width="0.800"/><path d="M825.500 357l6 4-6 4z"/><path d="M852 358.500v5M846.500 358.500v5l4-2.500z" stroke="#dcdcdc" stroke-width="0.800"/><path d="M871.500 357.500v7M868.500 361h-2M865 358.500l3 2.500-3 2.500z" stroke="#dcdcdc" stroke-width="1"/><path d="M888 364v-2.500q0-3.500 4.500-3.500t4.500 3.500v2.500h-2.500v-2.500q0-1-2-1t-2 1v2.500z"/><path d="M908 364v-2.500q0-3.500 4.500-3.500t4.500 3.500v2.500h-2.500v-2.500q0-1-2-1t-2 1v2.500z"/><path d="M929 359h2l1-1.500h3l1 1.500h2v5.500h-9z"/><circle cx="933.500" cy="361.700" r="1.500" fill="#1d1d1d"/><path d="M949.500 357.500h5v5h-5z"/><path d="M953 360.500h5v5h-5z" stroke="#1d1d1d" stroke-width="0.800"/></svg>
<svg style="left:1078px;top:358px" width="7" height="7" viewBox="0 0 7 7"><path d="M3.500 0.500v6M0.500 3.500h6" stroke="#e0e0e0" stroke-width="1.600"/></svg>
<div class="a" style="left:0px;top:374.6px;width:322px;height:231px;background:#202020;"></div>
<div class="a" style="left:321.5px;top:374.6px;width:1.5px;height:231px;background:#0e0e0e;"></div>
<div class="t " style="left:9px;top:376.7px;font-size:7px">项目: 视频</div>
<div class="t " style="left:120px;top:376.7px;font-size:7px">项目: 未命名</div>
<div class="t w" style="left:186px;top:376.7px;font-size:7px">效果</div>
<div class="t " style="left:204px;top:377.2px;font-size:6px">≡</div>
<div class="a" style="left:185px;top:389px;width:26px;height:1.5px;background:#c8c8c8;"></div>
<div class="t " style="left:225.5px;top:376.7px;font-size:7px">媒体浏览器</div>
<div class="t " style="left:287px;top:376.7px;font-size:7px">库</div>
<div class="t w" style="left:313px;top:376.5px;font-size:9px;font-weight:bold;color:#f0f0f0">»</div>
<div class="a" style="left:4px;top:393.5px;width:117px;height:10px;background:#111111;border-radius:1px"></div>
<svg style="left:6px;top:395px" width="7" height="7" viewBox="0 0 7 7"><circle cx="4" cy="3" r="2" stroke="#999" stroke-width="1" fill="none"/><path d="M2.500 4.500L0.800 6.200" stroke="#999" stroke-width="1.100"/></svg>
<svg style="left:129.2px;top:394px" width="9" height="8" viewBox="0 0 9 8"><rect x="0.500" y="0.500" width="8" height="7" rx="1" fill="#c4c4c4"/><path d="M2 4.500h5M4.500 2.500v4" stroke="#222" stroke-width="0.900"/><path d="M0.500 2h8" stroke="#222" stroke-width="0.600"/></svg>
<svg style="left:145.9px;top:394px" width="9" height="8" viewBox="0 0 9 8"><rect x="0.500" y="0.500" width="8" height="7" rx="1" fill="#c4c4c4"/><path d="M2 4.500h5M4.500 2.500v4" stroke="#222" stroke-width="0.900"/><path d="M0.500 2h8" stroke="#222" stroke-width="0.600"/></svg>
<svg style="left:162.5px;top:394px" width="9" height="8" viewBox="0 0 9 8"><rect x="0.500" y="0.500" width="8" height="7" rx="1" fill="#c4c4c4"/><path d="M2 4.500h5M4.500 2.500v4" stroke="#222" stroke-width="0.900"/><path d="M0.500 2h8" stroke="#222" stroke-width="0.600"/></svg>
<svg style="left:5px;top:410.5px" width="4" height="5" viewBox="0 0 4 5"><path d="M1 0.800l2 1.700-2 1.700" stroke="#8a8a8a" stroke-width="0.900" fill="none"/></svg>
<svg style="left:15px;top:409.5px" width="9" height="7" viewBox="0 0 9 7"><path d="M0.300 0.500h3.200l0.800 1h4.400v5h-8.400z" fill="#dedede"/><path d="M6.300 2.300l0.500 1.100 1.100 0.100-0.800 0.800 0.200 1.100-1-0.500-1 0.500 0.200-1.100-0.800-0.800 1.100-0.100z" fill="#333"/></svg>
<div class="t " style="left:28.4px;top:408px;font-size:7px;color:#b4b4b4">预设</div>
<svg style="left:5px;top:422.2px" width="4" height="5" viewBox="0 0 4 5"><path d="M1 0.800l2 1.700-2 1.700" stroke="#8a8a8a" stroke-width="0.900" fill="none"/></svg>
<svg style="left:15px;top:421.2px" width="9" height="7" viewBox="0 0 9 7"><path d="M0.300 0.500h3.200l0.800 1h4.400v5h-8.400z" fill="#dedede"/><path d="M6.300 2.300l0.500 1.100 1.100 0.100-0.800 0.800 0.200 1.100-1-0.500-1 0.500 0.200-1.100-0.800-0.800 1.100-0.100z" fill="#333"/></svg>
<div class="t " style="left:28.4px;top:419.7px;font-size:7px;color:#b4b4b4">Lumetri 预设</div>
<svg style="left:5px;top:433.5px" width="4" height="5" viewBox="0 0 4 5"><path d="M1 0.800l2 1.700-2 1.700" stroke="#8a8a8a" stroke-width="0.900" fill="none"/></svg>
<svg style="left:15px;top:432.5px" width="9" height="7" viewBox="0 0 9 7"><path d="M0.300 0.500h3.200l0.800 1h4.400v5h-8.400z" fill="#dedede"/></svg>
<div class="t " style="left:28.4px;top:431px;font-size:7px;color:#b4b4b4">音频效果</div>
<svg style="left:5px;top:444.8px" width="4" height="5" viewBox="0 0 4 5"><path d="M1 0.800l2 1.700-2 1.700" stroke="#8a8a8a" stroke-width="0.900" fill="none"/></svg>
<svg style="left:15px;top:443.8px" width="9" height="7" viewBox="0 0 9 7"><path d="M0.300 0.500h3.200l0.800 1h4.400v5h-8.400z" fill="#dedede"/></svg>
<div class="t " style="left:28.4px;top:442.3px;font-size:7px;color:#b4b4b4">音频过渡</div>
<svg style="left:5px;top:456.5px" width="4" height="5" viewBox="0 0 4 5"><path d="M1 0.800l2 1.700-2 1.700" stroke="#8a8a8a" stroke-width="0.900" fill="none"/></svg>
<svg style="left:15px;top:455.5px" width="9" height="7" viewBox="0 0 9 7"><path d="M0.300 0.500h3.200l0.800 1h4.400v5h-8.400z" fill="#dedede"/></svg>
<div class="t " style="left:28.4px;top:454px;font-size:7px;color:#b4b4b4">视频效果</div>
<svg style="left:5px;top:467.8px" width="4" height="5" viewBox="0 0 4 5"><path d="M1 0.800l2 1.700-2 1.700" stroke="#8a8a8a" stroke-width="0.900" fill="none"/></svg>
<svg style="left:15px;top:466.8px" width="9" height="7" viewBox="0 0 9 7"><path d="M0.300 0.500h3.200l0.800 1h4.400v5h-8.400z" fill="#dedede"/></svg>
<div class="t " style="left:28.4px;top:465.3px;font-size:7px;color:#b4b4b4">视频过渡</div>
<svg style="left:287px;top:596.500px" width="9" height="7" viewBox="0 0 9 7"><path d="M0.300 0.500h3.200l0.800 1h4.400v5h-8.400z" fill="#dedede"/></svg>
<svg style="left:302px;top:596px" width="7" height="8" viewBox="0 0 7 8"><path d="M1 2h5v5.500h-5zM0.500 1.500h6M2.500 0.700h2" stroke="#444" stroke-width="0.900" fill="#333"/></svg>
<div class="a" style="left:323px;top:374.6px;width:30px;height:231px;background:#202020;"></div>
<svg style="left:330px;top:384px" width="16" height="124" viewBox="330 384 16 124"><circle cx="337" cy="391.500" r="6.300" fill="#0c1c36"/><path d="M335 387.800l5.800 3.800-5.800 3.800z" fill="#9cc4f4"/><path d="M334 404h3.500v4.500h-3.500zM338.500 404.500l3.500 1.800-3.500 1.800z" fill="#d8d8d8"/><path d="M333 422.500l3-2.500v5zM342.500 422.500l-3-2.500v5zM337.700 419v7" fill="#d0d0d0" stroke="#d0d0d0" stroke-width="1.100"/><path d="M333 437.500l4.500-3.500 4.500 4-4.500 3.500z" fill="none" stroke="#d0d0d0" stroke-width="1.300"/><path d="M335 437.600l4 3" stroke="#d0d0d0" stroke-width="1.400"/><path d="M332.500 450.500l3 2-3 2M343 450.500l-3 2 3 2M336 452.500h3.500" stroke="#d0d0d0" stroke-width="1.200" fill="none"/><path d="M337.700 449.500v6" stroke="#d0d0d0" stroke-width="0.900"/><path d="M333.500 473.500l1-3 5-5 2 2-5 5z" fill="#e6e6e6"/><path d="M334.500 484.500v-3q0-0.800 0.800-0.800t0.800 0.800v-1.200q0-0.800 0.800-0.800t0.800 0.800v0.400q0-0.800 0.800-0.800t0.800 0.800v0.800q0-0.700 0.700-0.700t0.700 0.700v4q0 2.800-3 2.800t-3.400-2z" fill="#e0e0e0"/><path d="M334 495.500h7v1.800h-2.600v5.700h-1.800v-5.700h-2.600z" fill="#d8d8d8"/></svg>
<svg style="left:343.500px;top:410px" width="3" height="3"><path d="M2.500 0v2.500h-2.500z" fill="#888"/></svg>
<svg style="left:343.500px;top:441px" width="3" height="3"><path d="M2.500 0v2.500h-2.500z" fill="#888"/></svg>
<svg style="left:343.500px;top:472px" width="3" height="3"><path d="M2.500 0v2.500h-2.500z" fill="#888"/></svg>
<svg style="left:343.500px;top:488px" width="3" height="3"><path d="M2.500 0v2.500h-2.500z" fill="#888"/></svg>
<svg style="left:343.500px;top:503px" width="3" height="3"><path d="M2.500 0v2.500h-2.500z" fill="#888"/></svg>
<div class="a" style="left:353px;top:374.6px;width:717.5px;height:231px;background:#202020;border:2px solid #222f42"></div>
<div class="t " style="left:371px;top:377px;font-size:7px">视频</div>
<div class="t " style="left:389px;top:377.5px;font-size:5px">≡</div>
<div class="t " style="left:423px;top:377px;font-size:7px">嵌套序列 02</div>
<div class="t " style="left:495px;top:377px;font-size:7px">嵌套序列 01</div>
<div class="a" style="left:364px;top:392.5px;width:54px;height:9.5px;background:#0c2a48;"></div>
<div class="t b" style="left:365px;top:392.5px;font-size:9.300px;font-weight:bold">00:00:37:20</div>
<div class="t " style="left:490px;top:398.7px;font-size:6px;color:#9c9c9c">00:00</div>
<div class="t " style="left:523.7px;top:398.7px;font-size:6px;color:#9c9c9c">00:00:15:00</div>
<div class="t " style="left:573.33px;top:398.7px;font-size:6px;color:#9c9c9c">00:00:30:00</div>
<div class="t " style="left:622.96px;top:398.7px;font-size:6px;color:#9c9c9c">00:00:45:00</div>
<div class="t " style="left:672.59px;top:398.7px;font-size:6px;color:#9c9c9c">00:01:00:00</div>
<div class="t " style="left:722.22px;top:398.7px;font-size:6px;color:#9c9c9c">00:01:15:00</div>
<div class="t " style="left:771.85px;top:398.7px;font-size:6px;color:#9c9c9c">00:01:30:00</div>
<div class="t " style="left:821.48px;top:398.7px;font-size:6px;color:#9c9c9c">00:01:45:00</div>
<div class="t " style="left:871.1100000000001px;top:398.7px;font-size:6px;color:#9c9c9c">00:02:00:00</div>
<div class="t " style="left:920.74px;top:398.7px;font-size:6px;color:#9c9c9c">00:02:15:00</div>
<div class="t " style="left:970.3700000000001px;top:398.7px;font-size:6px;color:#9c9c9c">00:02:30:00</div>
<div class="t " style="left:1020.0px;top:398.7px;font-size:6px;color:#9c9c9c">00:02:45:00</div>
<div class="a" style="left:379px;top:416px;width:61px;height:178px;background:#1d1d1d;"></div>
<div class="a" style="left:355px;top:424.3px;width:700px;height:0.8px;background:#262626;"></div>
<div class="a" style="left:355px;top:438.5px;width:700px;height:0.8px;background:#262626;"></div>
<div class="a" style="left:355px;top:452.6px;width:700px;height:0.8px;background:#262626;"></div>
<div class="a" style="left:355px;top:467px;width:700px;height:0.8px;background:#262626;"></div>
<div class="a" style="left:355px;top:481.5px;width:700px;height:0.8px;background:#262626;"></div>
<div class="a" style="left:355px;top:495.4px;width:700px;height:0.8px;background:#262626;"></div>
<div class="a" style="left:355px;top:510px;width:700px;height:0.8px;background:#262626;"></div>
<div class="a" style="left:355px;top:524px;width:700px;height:0.8px;background:#262626;"></div>
<div class="a" style="left:355px;top:538.5px;width:700px;height:0.8px;background:#262626;"></div>
<div class="a" style="left:355px;top:555.5px;width:700px;height:0.8px;background:#262626;"></div>
<div class="a" style="left:355px;top:569.5px;width:700px;height:0.8px;background:#262626;"></div>
<div class="a" style="left:355px;top:583.5px;width:700px;height:0.8px;background:#262626;"></div>
<div class="a" style="left:355px;top:539.3px;width:700px;height:1px;background:#171717;"></div>
<div class="a" style="left:360.7px;top:424.5px;width:18.7px;height:14px;background:#1565b8;"></div>
<div class="t " style="left:366px;top:426.5px;font-size:6px;color:#9cc8ff">V1</div>
<div class="a" style="left:390.6px;top:424.5px;width:18.1px;height:14px;background:#1565b8;"></div>
<svg style="left:382.2px;top:414.5px" width="5" height="7" viewBox="0 0 5 7"><path d="M1.200 3v-1q0-1.300 1.300-1.300t1.300 1.300v1" stroke="#e4e4e4" stroke-width="0.900" fill="none"/><rect x="0.300" y="2.800" width="4.400" height="3.700" rx="0.500" fill="#e4e4e4"/></svg>
<div class="t " style="left:396.5px;top:413px;font-size:5.500px;color:#8a8a8a">V9</div>
<svg style="left:412.7px;top:415px" width="8" height="6" viewBox="0 0 8 6"><rect x="0.500" y="0.500" width="7" height="5" rx="0.800" fill="none" stroke="#d0d0d0" stroke-width="1"/><rect x="2.200" y="0.500" width="3.600" height="5" fill="#d0d0d0"/></svg>
<svg style="left:428px;top:415px" width="8" height="6" viewBox="0 0 8 6"><path d="M0.400 3q3.600-4.400 7.200 0-3.600 4.400-7.200 0z" fill="#d4d4d4"/><circle cx="4" cy="3" r="1.300" fill="#1d1d1d"/></svg>
<svg style="left:382.2px;top:428.0px" width="5" height="7" viewBox="0 0 5 7"><path d="M1.200 3v-1q0-1.300 1.300-1.300t1.300 1.300v1" stroke="#e4e4e4" stroke-width="0.900" fill="none"/><rect x="0.300" y="2.800" width="4.400" height="3.700" rx="0.500" fill="#e4e4e4"/></svg>
<div class="t " style="left:396.5px;top:426.5px;font-size:5.500px;color:#9cc8ff">V8</div>
<svg style="left:412.7px;top:428.5px" width="8" height="6" viewBox="0 0 8 6"><rect x="0.500" y="0.500" width="7" height="5" rx="0.800" fill="none" stroke="#d0d0d0" stroke-width="1"/><rect x="2.200" y="0.500" width="3.600" height="5" fill="#d0d0d0"/></svg>
<svg style="left:428px;top:428.5px" width="8" height="6" viewBox="0 0 8 6"><path d="M0.400 3q3.600-4.400 7.200 0-3.600 4.400-7.200 0z" fill="#d4d4d4"/><circle cx="4" cy="3" r="1.300" fill="#1d1d1d"/></svg>
<svg style="left:382.2px;top:442.2px" width="5" height="7" viewBox="0 0 5 7"><path d="M1.200 3v-1q0-1.300 1.300-1.300t1.300 1.300v1" stroke="#e4e4e4" stroke-width="0.900" fill="none"/><rect x="0.300" y="2.800" width="4.400" height="3.700" rx="0.500" fill="#e4e4e4"/></svg>
<div class="t " style="left:396.5px;top:440.7px;font-size:5.500px;color:#a06a50">V7</div>
<svg style="left:412.7px;top:442.7px" width="8" height="6" viewBox="0 0 8 6"><rect x="0.500" y="0.500" width="7" height="5" rx="0.800" fill="none" stroke="#d0d0d0" stroke-width="1"/><rect x="2.200" y="0.500" width="3.600" height="5" fill="#d0d0d0"/></svg>
<svg style="left:428px;top:442.7px" width="8" height="6" viewBox="0 0 8 6"><path d="M0.400 3q3.600-4.400 7.200 0-3.600 4.400-7.200 0z" fill="#d4d4d4"/><circle cx="4" cy="3" r="1.300" fill="#1d1d1d"/></svg>
<svg style="left:382.2px;top:456.5px" width="5" height="7" viewBox="0 0 5 7"><path d="M1.200 3v-1q0-1.300 1.300-1.300t1.300 1.300v1" stroke="#e4e4e4" stroke-width="0.900" fill="none"/><rect x="0.300" y="2.800" width="4.400" height="3.700" rx="0.500" fill="#e4e4e4"/></svg>
<div class="t " style="left:396.5px;top:455px;font-size:5.500px;color:#8a8a8a">V6</div>
<svg style="left:412.7px;top:457px" width="8" height="6" viewBox="0 0 8 6"><rect x="0.500" y="0.500" width="7" height="5" rx="0.800" fill="none" stroke="#d0d0d0" stroke-width="1"/><rect x="2.200" y="0.500" width="3.600" height="5" fill="#d0d0d0"/></svg>
<svg style="left:428px;top:457px" width="8" height="6" viewBox="0 0 8 6"><path d="M0.400 3q3.600-4.400 7.200 0-3.600 4.400-7.200 0z" fill="#d4d4d4"/><circle cx="4" cy="3" r="1.300" fill="#1d1d1d"/></svg>
<svg style="left:382.2px;top:471.0px" width="5" height="7" viewBox="0 0 5 7"><path d="M1.200 3v-1q0-1.300 1.300-1.300t1.300 1.300v1" stroke="#e4e4e4" stroke-width="0.900" fill="none"/><rect x="0.300" y="2.800" width="4.400" height="3.700" rx="0.500" fill="#e4e4e4"/></svg>
<div class="t " style="left:396.5px;top:469.5px;font-size:5.500px;color:#8a8a8a">V5</div>
<svg style="left:412.7px;top:471.5px" width="8" height="6" viewBox="0 0 8 6"><rect x="0.500" y="0.500" width="7" height="5" rx="0.800" fill="none" stroke="#d0d0d0" stroke-width="1"/><rect x="2.200" y="0.500" width="3.600" height="5" fill="#d0d0d0"/></svg>
<svg style="left:428px;top:471.5px" width="8" height="6" viewBox="0 0 8 6"><path d="M0.400 3q3.600-4.400 7.200 0-3.600 4.400-7.200 0z" fill="#d4d4d4"/><circle cx="4" cy="3" r="1.300" fill="#1d1d1d"/></svg>
<svg style="left:382.2px;top:484.5px" width="5" height="7" viewBox="0 0 5 7"><path d="M1.200 3v-1q0-1.300 1.300-1.300t1.300 1.300v1" stroke="#e4e4e4" stroke-width="0.900" fill="none"/><rect x="0.300" y="2.800" width="4.400" height="3.700" rx="0.500" fill="#e4e4e4"/></svg>
<div class="t " style="left:396.5px;top:483px;font-size:5.500px;color:#8a8a8a">V4</div>
<svg style="left:412.7px;top:485px" width="8" height="6" viewBox="0 0 8 6"><rect x="0.500" y="0.500" width="7" height="5" rx="0.800" fill="none" stroke="#d0d0d0" stroke-width="1"/><rect x="2.200" y="0.500" width="3.600" height="5" fill="#d0d0d0"/></svg>
<svg style="left:428px;top:485px" width="8" height="6" viewBox="0 0 8 6"><path d="M0.400 3q3.600-4.400 7.200 0-3.600 4.400-7.200 0z" fill="#d4d4d4"/><circle cx="4" cy="3" r="1.300" fill="#1d1d1d"/></svg>
<svg style="left:382.2px;top:499.0px" width="5" height="7" viewBox="0 0 5 7"><path d="M1.200 3v-1q0-1.300 1.300-1.300t1.300 1.300v1" stroke="#e4e4e4" stroke-width="0.900" fill="none"/><rect x="0.300" y="2.800" width="4.400" height="3.700" rx="0.500" fill="#e4e4e4"/></svg>
<div class="t " style="left:396.5px;top:497.5px;font-size:5.500px;color:#8a8a8a">V3</div>
<svg style="left:412.7px;top:499.5px" width="8" height="6" viewBox="0 0 8 6"><rect x="0.500" y="0.500" width="7" height="5" rx="0.800" fill="none" stroke="#d0d0d0" stroke-width="1"/><rect x="2.200" y="0.500" width="3.600" height="5" fill="#d0d0d0"/></svg>
<svg style="left:428px;top:499.5px" width="8" height="6" viewBox="0 0 8 6"><path d="M0.400 3q3.600-4.400 7.200 0-3.600 4.400-7.200 0z" fill="#d4d4d4"/><circle cx="4" cy="3" r="1.300" fill="#1d1d1d"/></svg>
<svg style="left:382.2px;top:513.5px" width="5" height="7" viewBox="0 0 5 7"><path d="M1.200 3v-1q0-1.300 1.300-1.300t1.300 1.300v1" stroke="#e4e4e4" stroke-width="0.900" fill="none"/><rect x="0.300" y="2.800" width="4.400" height="3.700" rx="0.500" fill="#e4e4e4"/></svg>
<div class="t " style="left:396.5px;top:512px;font-size:5.500px;color:#8a8a8a">V2</div>
<svg style="left:412.7px;top:514px" width="8" height="6" viewBox="0 0 8 6"><rect x="0.500" y="0.500" width="7" height="5" rx="0.800" fill="none" stroke="#d0d0d0" stroke-width="1"/><rect x="2.200" y="0.500" width="3.600" height="5" fill="#d0d0d0"/></svg>
<svg style="left:428px;top:514px" width="8" height="6" viewBox="0 0 8 6"><path d="M0.400 3q3.600-4.400 7.200 0-3.600 4.400-7.200 0z" fill="#d4d4d4"/><circle cx="4" cy="3" r="1.300" fill="#1d1d1d"/></svg>
<svg style="left:382.2px;top:528.0px" width="5" height="7" viewBox="0 0 5 7"><path d="M1.200 3v-1q0-1.300 1.300-1.300t1.300 1.300v1" stroke="#e4e4e4" stroke-width="0.900" fill="none"/><rect x="0.300" y="2.800" width="4.400" height="3.700" rx="0.500" fill="#e4e4e4"/></svg>
<div class="t " style="left:396.5px;top:526.5px;font-size:5.500px;color:#a06a50">V1</div>
<svg style="left:412.7px;top:528.5px" width="8" height="6" viewBox="0 0 8 6"><rect x="0.500" y="0.500" width="7" height="5" rx="0.800" fill="none" stroke="#d0d0d0" stroke-width="1"/><rect x="2.200" y="0.500" width="3.600" height="5" fill="#d0d0d0"/></svg>
<svg style="left:428px;top:528.5px" width="8" height="6" viewBox="0 0 8 6"><path d="M0.400 3q3.600-4.400 7.200 0-3.600 4.400-7.200 0z" fill="#d4d4d4"/><circle cx="4" cy="3" r="1.300" fill="#1d1d1d"/></svg>
<div class="a" style="left:390.3px;top:539.8px;width:18.7px;height:44px;background:#1565b8;"></div>
<svg style="left:382.2px;top:544.5px" width="5" height="7" viewBox="0 0 5 7"><path d="M1.200 3v-1q0-1.300 1.300-1.300t1.300 1.300v1" stroke="#e4e4e4" stroke-width="0.900" fill="none"/><rect x="0.300" y="2.800" width="4.400" height="3.700" rx="0.500" fill="#e4e4e4"/></svg>
<div class="t " style="left:396.5px;top:543px;font-size:5.500px;color:#9cc8ff">A1</div>
<svg style="left:412.7px;top:545px" width="8" height="6" viewBox="0 0 8 6"><rect x="0.500" y="0.500" width="7" height="5" rx="0.800" fill="none" stroke="#d0d0d0" stroke-width="1"/><rect x="2.200" y="0.500" width="3.600" height="5" fill="#d0d0d0"/></svg>
<div class="t " style="left:430px;top:543px;font-size:5.500px;color:#9a9a9a">M</div>
<div class="t " style="left:445.5px;top:543px;font-size:5.500px;color:#9a9a9a">S</div>
<svg style="left:459px;top:544.5px" width="5" height="7" viewBox="0 0 5 7"><rect x="1.500" y="0.500" width="2" height="3.500" rx="1" fill="#9a9a9a"/><path d="M0.500 3.500q0 2 2 2t2-2M2.500 5.500v1.200" stroke="#9a9a9a" stroke-width="0.700" fill="none"/></svg>
<svg style="left:382.2px;top:558.5px" width="5" height="7" viewBox="0 0 5 7"><path d="M1.200 3v-1q0-1.300 1.300-1.300t1.300 1.300v1" stroke="#e4e4e4" stroke-width="0.900" fill="none"/><rect x="0.300" y="2.800" width="4.400" height="3.700" rx="0.500" fill="#e4e4e4"/></svg>
<div class="t " style="left:396.5px;top:557px;font-size:5.500px;color:#9cc8ff">A2</div>
<svg style="left:412.7px;top:559px" width="8" height="6" viewBox="0 0 8 6"><rect x="0.500" y="0.500" width="7" height="5" rx="0.800" fill="none" stroke="#d0d0d0" stroke-width="1"/><rect x="2.200" y="0.500" width="3.600" height="5" fill="#d0d0d0"/></svg>
<div class="t " style="left:430px;top:557px;font-size:5.500px;color:#9a9a9a">M</div>
<div class="t " style="left:445.5px;top:557px;font-size:5.500px;color:#9a9a9a">S</div>
<svg style="left:459px;top:558.5px" width="5" height="7" viewBox="0 0 5 7"><rect x="1.500" y="0.500" width="2" height="3.500" rx="1" fill="#9a9a9a"/><path d="M0.500 3.500q0 2 2 2t2-2M2.500 5.500v1.200" stroke="#9a9a9a" stroke-width="0.700" fill="none"/></svg>
<svg style="left:382.2px;top:573.0px" width="5" height="7" viewBox="0 0 5 7"><path d="M1.200 3v-1q0-1.300 1.300-1.300t1.300 1.300v1" stroke="#e4e4e4" stroke-width="0.900" fill="none"/><rect x="0.300" y="2.800" width="4.400" height="3.700" rx="0.500" fill="#e4e4e4"/></svg>
<div class="t " style="left:396.5px;top:571.5px;font-size:5.500px;color:#9cc8ff">A3</div>
<svg style="left:412.7px;top:573.5px" width="8" height="6" viewBox="0 0 8 6"><rect x="0.500" y="0.500" width="7" height="5" rx="0.800" fill="none" stroke="#d0d0d0" stroke-width="1"/><rect x="2.200" y="0.500" width="3.600" height="5" fill="#d0d0d0"/></svg>
<div class="t " style="left:430px;top:571.5px;font-size:5.500px;color:#9a9a9a">M</div>
<div class="t " style="left:445.5px;top:571.5px;font-size:5.500px;color:#9a9a9a">S</div>
<svg style="left:459px;top:573.0px" width="5" height="7" viewBox="0 0 5 7"><rect x="1.500" y="0.500" width="2" height="3.500" rx="1" fill="#9a9a9a"/><path d="M0.500 3.500q0 2 2 2t2-2M2.500 5.500v1.200" stroke="#9a9a9a" stroke-width="0.700" fill="none"/></svg>
<svg style="left:382.2px;top:585.5px" width="5" height="7" viewBox="0 0 5 7"><path d="M1.200 3v-1q0-1.300 1.300-1.300t1.300 1.300v1" stroke="#e4e4e4" stroke-width="0.900" fill="none"/><rect x="0.300" y="2.800" width="4.400" height="3.700" rx="0.500" fill="#e4e4e4"/></svg>
<div class="t " style="left:396.5px;top:584px;font-size:5.500px;color:#a06a50">A4</div>
<svg style="left:412.7px;top:586px" width="8" height="6" viewBox="0 0 8 6"><rect x="0.500" y="0.500" width="7" height="5" rx="0.800" fill="none" stroke="#d0d0d0" stroke-width="1"/><rect x="2.200" y="0.500" width="3.600" height="5" fill="#d0d0d0"/></svg>
<div class="t " style="left:430px;top:584px;font-size:5.500px;color:#9a9a9a">M</div>
<div class="t " style="left:445.5px;top:584px;font-size:5.500px;color:#9a9a9a">S</div>
<svg style="left:459px;top:585.5px" width="5" height="7" viewBox="0 0 5 7"><rect x="1.500" y="0.500" width="2" height="3.500" rx="1" fill="#9a9a9a"/><path d="M0.500 3.500q0 2 2 2t2-2M2.500 5.500v1.200" stroke="#9a9a9a" stroke-width="0.700" fill="none"/></svg>
<div class="a" style="left:379px;top:404px;width:61px;height:10.5px;background:#202020;"></div>
<div class="a" style="left:440px;top:404px;width:49px;height:10.5px;background:#202020;"></div>
<svg style="left:364px;top:406px" width="92" height="11" viewBox="364 406 92 11"><rect x="365" y="402" width="51" height="13.500" fill="#0c2a48"/><path d="M366.500 413q0-3 2.500-4.500 2.500 1.500 2.500 4.500l-2.500 1.500z" fill="#2d7fd6"/><path d="M385.500 414v-2q0-3 3.500-3t3.500 3v2" stroke="#2d7fd6" stroke-width="1.600" fill="none"/><path d="M404.500 408h7l-1 4-2.500 2.500-2.500-2.500z" fill="#2d7fd6"/><path d="M406.500 410l1.500 2 2-3" stroke="#1d1d1d" stroke-width="0.900" fill="none"/><path d="M426 409h4v3l-2 2-2-2z" fill="#e0e0e0"/><path d="M445 408.500l5 5.500" stroke="#e6e6e6" stroke-width="1.800" stroke-linecap="round"/><circle cx="445.500" cy="409" r="1.600" fill="#e6e6e6"/></svg>
<div class="a" style="left:488.8px;top:415.6px;width:11.2px;height:7.9px;background:#e58ee6;box-shadow:inset 0 0 0 0.5px #a45ca6"></div>
<div class="a" style="left:488.8px;top:423.5px;width:11.2px;height:13.3px;background:#e58ee6;box-shadow:inset 0 0 0 0.5px #a45ca6"></div>
<div class="a" style="left:488.8px;top:438.0px;width:11.2px;height:14.6px;background:#4fc75d;box-shadow:inset 0 0 0 0.5px #2f8a3c"></div>
<div class="a" style="left:488.8px;top:453.5px;width:11.2px;height:13.5px;background:#e58ee6;box-shadow:inset 0 0 0 0.5px #a45ca6"></div>
<div class="a" style="left:494.0px;top:467.0px;width:6.0px;height:14.5px;background:#e58ee6;box-shadow:inset 0 0 0 0.5px #a45ca6"></div>
<div class="a" style="left:489.3px;top:481.5px;width:20.4px;height:13.9px;background:#e58ee6;box-shadow:inset 0 0 0 0.5px #a45ca6"></div>
<div class="a" style="left:516.4px;top:481.5px;width:112.1px;height:13.9px;background:#e58ee6;box-shadow:inset 0 0 0 0.5px #a45ca6"></div>
<div class="a" style="left:653.0px;top:481.5px;width:259.5px;height:13.9px;background:#e58ee6;box-shadow:inset 0 0 0 0.5px #a45ca6"></div>
<div class="a" style="left:497px;top:481.5px;width:0.8px;height:13.9px;background:#b868ba;"></div>
<div class="a" style="left:529px;top:481.5px;width:0.8px;height:13.9px;background:#b868ba;"></div>
<div class="a" style="left:543px;top:481.5px;width:0.8px;height:13.9px;background:#b868ba;"></div>
<div class="a" style="left:557px;top:481.5px;width:0.8px;height:13.9px;background:#b868ba;"></div>
<div class="a" style="left:568px;top:481.5px;width:0.8px;height:13.9px;background:#b868ba;"></div>
<div class="a" style="left:581px;top:481.5px;width:0.8px;height:13.9px;background:#b868ba;"></div>
<div class="a" style="left:594px;top:481.5px;width:0.8px;height:13.9px;background:#b868ba;"></div>
<div class="a" style="left:607px;top:481.5px;width:0.8px;height:13.9px;background:#b868ba;"></div>
<div class="a" style="left:617px;top:481.5px;width:0.8px;height:13.9px;background:#b868ba;"></div>
<div class="a" style="left:666px;top:481.5px;width:0.8px;height:13.9px;background:#b868ba;"></div>
<div class="a" style="left:679px;top:481.5px;width:0.8px;height:13.9px;background:#b868ba;"></div>
<div class="a" style="left:690px;top:481.5px;width:0.8px;height:13.9px;background:#b868ba;"></div>
<div class="a" style="left:702px;top:481.5px;width:0.8px;height:13.9px;background:#b868ba;"></div>
<div class="a" style="left:713px;top:481.5px;width:0.8px;height:13.9px;background:#b868ba;"></div>
<div class="a" style="left:725px;top:481.5px;width:0.8px;height:13.9px;background:#b868ba;"></div>
<div class="a" style="left:735px;top:481.5px;width:0.8px;height:13.9px;background:#b868ba;"></div>
<div class="a" style="left:747px;top:481.5px;width:0.8px;height:13.9px;background:#b868ba;"></div>
<div class="a" style="left:756px;top:481.5px;width:0.8px;height:13.9px;background:#b868ba;"></div>
<div class="a" style="left:768px;top:481.5px;width:0.8px;height:13.9px;background:#b868ba;"></div>
<div class="a" style="left:780px;top:481.5px;width:0.8px;height:13.9px;background:#b868ba;"></div>
<div class="a" style="left:793px;top:481.5px;width:0.8px;height:13.9px;background:#b868ba;"></div>
<div class="a" style="left:805px;top:481.5px;width:0.8px;height:13.9px;background:#b868ba;"></div>
<div class="a" style="left:818px;top:481.5px;width:0.8px;height:13.9px;background:#b868ba;"></div>
<div class="a" style="left:832px;top:481.5px;width:0.8px;height:13.9px;background:#b868ba;"></div>
<div class="a" style="left:846px;top:481.5px;width:0.8px;height:13.9px;background:#b868ba;"></div>
<div class="a" style="left:858px;top:481.5px;width:0.8px;height:13.9px;background:#b868ba;"></div>
<div class="a" style="left:870px;top:481.5px;width:0.8px;height:13.9px;background:#b868ba;"></div>
<div class="a" style="left:882px;top:481.5px;width:0.8px;height:13.9px;background:#b868ba;"></div>
<div class="a" style="left:894px;top:481.5px;width:0.8px;height:13.9px;background:#b868ba;"></div>
<div class="a" style="left:903px;top:481.5px;width:0.8px;height:13.9px;background:#b868ba;"></div>
<div class="a" style="left:489.3px;top:495.4px;width:20.4px;height:14.6px;background:#e58ee6;box-shadow:inset 0 0 0 0.5px #a45ca6"></div>
<div class="a" style="left:523.0px;top:495.4px;width:12.0px;height:14.6px;background:#e58ee6;box-shadow:inset 0 0 0 0.5px #a45ca6"></div>
<div class="a" style="left:550.8px;top:495.4px;width:5.5px;height:14.6px;background:#e58ee6;box-shadow:inset 0 0 0 0.5px #a45ca6"></div>
<div class="a" style="left:563.9px;top:495.4px;width:12.1px;height:14.6px;background:#e58ee6;box-shadow:inset 0 0 0 0.5px #a45ca6"></div>
<div class="a" style="left:578.0px;top:495.4px;width:5.0px;height:14.6px;background:#e58ee6;box-shadow:inset 0 0 0 0.5px #a45ca6"></div>
<div class="a" style="left:589.0px;top:495.4px;width:5.0px;height:14.6px;background:#e58ee6;box-shadow:inset 0 0 0 0.5px #a45ca6"></div>
<div class="a" style="left:617.0px;top:495.4px;width:11.5px;height:14.6px;background:#e58ee6;box-shadow:inset 0 0 0 0.5px #a45ca6"></div>
<div class="a" style="left:640.0px;top:495.4px;width:4.5px;height:14.6px;background:#e58ee6;box-shadow:inset 0 0 0 0.5px #a45ca6"></div>
<div class="a" style="left:664.0px;top:495.4px;width:8.0px;height:14.6px;background:#e58ee6;box-shadow:inset 0 0 0 0.5px #a45ca6"></div>
<div class="a" style="left:673.6px;top:495.4px;width:5.0px;height:14.6px;background:#e58ee6;box-shadow:inset 0 0 0 0.5px #a45ca6"></div>
<div class="a" style="left:699.0px;top:495.4px;width:8.0px;height:14.6px;background:#e58ee6;box-shadow:inset 0 0 0 0.5px #a45ca6"></div>
<div class="a" style="left:714.0px;top:495.4px;width:9.0px;height:14.6px;background:#e58ee6;box-shadow:inset 0 0 0 0.5px #a45ca6"></div>
<div class="a" style="left:726.0px;top:495.4px;width:4.0px;height:14.6px;background:#e58ee6;box-shadow:inset 0 0 0 0.5px #a45ca6"></div>
<div class="a" style="left:734.0px;top:495.4px;width:3.0px;height:14.6px;background:#e58ee6;box-shadow:inset 0 0 0 0.5px #a45ca6"></div>
<div class="a" style="left:748.0px;top:495.4px;width:4.0px;height:14.6px;background:#e58ee6;box-shadow:inset 0 0 0 0.5px #a45ca6"></div>
<div class="a" style="left:793.0px;top:495.4px;width:6.0px;height:14.6px;background:#e58ee6;box-shadow:inset 0 0 0 0.5px #a45ca6"></div>
<div class="a" style="left:803.0px;top:495.4px;width:4.7px;height:14.6px;background:#e58ee6;box-shadow:inset 0 0 0 0.5px #a45ca6"></div>
<div class="a" style="left:810.6px;top:495.4px;width:10.2px;height:14.6px;background:#e58ee6;box-shadow:inset 0 0 0 0.5px #a45ca6"></div>
<div class="a" style="left:863.0px;top:495.4px;width:5.8px;height:14.6px;background:#e58ee6;box-shadow:inset 0 0 0 0.5px #a45ca6"></div>
<div class="a" style="left:895.0px;top:495.4px;width:4.4px;height:14.6px;background:#e58ee6;box-shadow:inset 0 0 0 0.5px #a45ca6"></div>
<div class="a" style="left:915.4px;top:495.4px;width:3.6px;height:14.6px;background:#e58ee6;box-shadow:inset 0 0 0 0.5px #a45ca6"></div>
<div class="a" style="left:755.0px;top:495.4px;width:12.0px;height:14.6px;background:#4fc75d;box-shadow:inset 0 0 0 0.5px #2f8a3c"></div>
<div class="a" style="left:499px;top:495.4px;width:0.8px;height:14.6px;background:#b868ba;"></div>
<div class="a" style="left:569.5px;top:495.4px;width:0.8px;height:14.6px;background:#b868ba;"></div>
<div class="a" style="left:622px;top:495.4px;width:0.8px;height:14.6px;background:#b868ba;"></div>
<div class="a" style="left:815px;top:495.4px;width:0.8px;height:14.6px;background:#b868ba;"></div>
<div class="a" style="left:550.8px;top:467.0px;width:5.5px;height:14.5px;background:#e58ee6;box-shadow:inset 0 0 0 0.5px #a45ca6"></div>
<div class="a" style="left:564.4px;top:467.0px;width:3.6px;height:14.5px;background:#e58ee6;box-shadow:inset 0 0 0 0.5px #a45ca6"></div>
<div class="a" style="left:639.0px;top:467.0px;width:8.4px;height:14.5px;background:#e58ee6;box-shadow:inset 0 0 0 0.5px #a45ca6"></div>
<div class="a" style="left:615.4px;top:467.0px;width:13.1px;height:14.5px;background:#d9d9e6;box-shadow:inset 0 0 0 0.5px #9a9aa8"></div>
<div class="a" style="left:640.0px;top:481.5px;width:4.5px;height:13.9px;background:#e58ee6;box-shadow:inset 0 0 0 0.5px #a45ca6"></div>
<div class="a" style="left:882.0px;top:467.0px;width:12.0px;height:14.5px;background:#6f9fe0;box-shadow:inset 0 0 0 0.5px #3f6fb0"></div>
<div class="a" style="left:909.6px;top:467.0px;width:30.4px;height:14.5px;background:#e58ee6;box-shadow:inset 0 0 0 0.5px #a45ca6"></div>
<div class="a" style="left:683.0px;top:452.6px;width:5.5px;height:28.9px;background:#e58ee6;box-shadow:inset 0 0 0 0.5px #a45ca6"></div>
<div class="a" style="left:787.0px;top:452.6px;width:6.0px;height:28.9px;background:#e58ee6;box-shadow:inset 0 0 0 0.5px #a45ca6"></div>
<div class="a" style="left:851.0px;top:452.6px;width:4.7px;height:28.9px;background:#e58ee6;box-shadow:inset 0 0 0 0.5px #a45ca6"></div>
<div class="a" style="left:909.6px;top:452.6px;width:3.8px;height:14.4px;background:#e58ee6;box-shadow:inset 0 0 0 0.5px #a45ca6"></div>
<div class="a" style="left:931.0px;top:452.6px;width:9.0px;height:14.4px;background:#4fc75d;box-shadow:inset 0 0 0 0.5px #2f8a3c"></div>
<div class="a" style="left:915.4px;top:481.5px;width:2.6px;height:28.5px;background:#e58ee6;box-shadow:inset 0 0 0 0.5px #a45ca6"></div>
<svg style="left:521.5px;top:485px" width="5" height="5" viewBox="0 0 6 6"><rect width="6" height="6" rx="1" fill="#f0a050" opacity="0.700"/><path d="M1.500 1l3 2-3 2z" fill="#8a3050"/></svg>
<svg style="left:542.5px;top:485px" width="5" height="5" viewBox="0 0 6 6"><rect width="6" height="6" rx="1" fill="#f0a050" opacity="0.700"/><path d="M1.500 1l3 2-3 2z" fill="#8a3050"/></svg>
<svg style="left:681.5px;top:485px" width="5" height="5" viewBox="0 0 6 6"><rect width="6" height="6" rx="1" fill="#f0a050" opacity="0.700"/><path d="M1.500 1l3 2-3 2z" fill="#8a3050"/></svg>
<svg style="left:739.5px;top:485px" width="5" height="5" viewBox="0 0 6 6"><rect width="6" height="6" rx="1" fill="#f0a050" opacity="0.700"/><path d="M1.500 1l3 2-3 2z" fill="#8a3050"/></svg>
<svg style="left:758.5px;top:485px" width="5" height="5" viewBox="0 0 6 6"><rect width="6" height="6" rx="1" fill="#f0a050" opacity="0.700"/><path d="M1.500 1l3 2-3 2z" fill="#8a3050"/></svg>
<svg style="left:799.5px;top:485px" width="5" height="5" viewBox="0 0 6 6"><rect width="6" height="6" rx="1" fill="#f0a050" opacity="0.700"/><path d="M1.500 1l3 2-3 2z" fill="#8a3050"/></svg>
<svg style="left:826.5px;top:485px" width="5" height="5" viewBox="0 0 6 6"><rect width="6" height="6" rx="1" fill="#f0a050" opacity="0.700"/><path d="M1.500 1l3 2-3 2z" fill="#8a3050"/></svg>
<svg style="left:853.5px;top:485px" width="5" height="5" viewBox="0 0 6 6"><rect width="6" height="6" rx="1" fill="#f0a050" opacity="0.700"/><path d="M1.500 1l3 2-3 2z" fill="#8a3050"/></svg>
<svg style="left:919px;top:471px" width="5" height="5" viewBox="0 0 6 6"><rect width="6" height="6" rx="1" fill="#f0a050" opacity="0.700"/><path d="M1.500 1l3 2-3 2z" fill="#8a3050"/></svg>
<div class="a" style="left:488.8px;top:510.0px;width:451.7px;height:14.0px;background:#4fc75d;box-shadow:inset 0 0 0 0.5px #2f8a3c"></div>
<div class="a" style="left:488.8px;top:524.0px;width:451.7px;height:14.5px;background:#4bc059;box-shadow:inset 0 0 0 0.5px #2f8a3c"></div>
<div class="a" style="left:617px;top:510px;width:0.8px;height:14px;background:#35953f;"></div>
<div class="a" style="left:713px;top:510px;width:0.8px;height:14px;background:#35953f;"></div>
<div class="a" style="left:754px;top:510px;width:0.8px;height:14px;background:#35953f;"></div>
<div class="a" style="left:767px;top:510px;width:0.8px;height:14px;background:#35953f;"></div>
<div class="a" style="left:882px;top:510px;width:0.8px;height:14px;background:#35953f;"></div>
<div class="a" style="left:896px;top:510px;width:0.8px;height:14px;background:#35953f;"></div>
<div class="t " style="left:506px;top:512px;font-size:5px;color:#14501e;font-weight:bold">▲ 嵌套序列 01</div>
<div class="t " style="left:625px;top:512px;font-size:5px;color:#14501e;font-weight:bold">▲ 嵌套序列 01</div>
<div class="t " style="left:721px;top:512px;font-size:5px;color:#14501e;font-weight:bold">▲ 嵌套序列 01</div>
<div class="t " style="left:773px;top:512px;font-size:5px;color:#14501e;font-weight:bold">▲ 嵌套序列 01</div>
<div class="t " style="left:901px;top:512px;font-size:5px;color:#14501e;font-weight:bold">▲ 嵌套序列 01</div>
<div class="t " style="left:496px;top:526px;font-size:5px;color:#14501e;font-weight:bold">▲ 嵌套序列 02</div>
<svg style="left:490px;top:528px" width="6" height="6" viewBox="0 0 6 6"><rect width="6" height="6" rx="1" fill="#d8e8d8"/><path d="M1.500 1l3 2-3 2z" fill="#245"/></svg>
<div class="a" style="left:488.8px;top:541.3px;width:451.7px;height:14.1px;background:#27a878;box-shadow:inset 0 0 0 0.5px #128a60"></div>
<svg style="left:0;top:0" width="1100" height="618" viewBox="0 0 1100 618"><path d="M490 555.400L490.0 546.6L490.9 549.9L491.8 546.6L492.7 549.9L493.6 545.0L494.5 548.3L495.4 548.1L496.3 551.4L497.2 547.2L498.1 550.5L499.0 546.3L499.9 549.6L500.8 543.2L501.7 546.5L502.6 543.7L503.5 547.0L504.4 545.6L505.3 548.9L506.2 546.0L507.1 549.3L508.0 545.7L508.9 549.0L509.8 543.8L510.7 547.1L511.6 546.8L512.5 550.1L513.4 547.5L514.3 550.8L515.2 549.1L516.1 552.4L517.0 545.4L517.9 548.7L518.8 545.2L519.7 548.5L520.6 545.1L521.5 548.4L522.4 546.6L523.3 549.9L524.2 545.6L525.1 548.9L526.0 543.2L526.9 546.5L527.8 543.9L528.7 547.2L529.6 545.0L530.5 548.3L531.4 548.4L532.3 551.7L533.2 546.3L534.1 549.6L535.0 546.4L535.9 549.7L536.8 545.2L537.7 548.5L538.6 548.1L539.5 551.4L540.4 547.4L541.3 550.7L542.2 545.9L543.1 549.2L544.0 543.5L544.9 546.8L545.8 543.5L546.7 546.8L547.6 546.1L548.5 549.4L549.4 545.6L550.3 548.9L551.2 545.7L552.1 549.0L553.0 543.6L553.9 546.9L554.8 547.0L555.7 550.3L556.6 547.6L557.5 550.9L558.4 548.8L559.3 552.1L560.2 545.5L561.1 548.8L562.0 545.0L562.9 548.3L563.8 545.6L564.7 548.9L565.6 546.4L566.5 549.7L567.4 545.7L568.3 549.0L569.2 542.8L570.1 546.1L571.0 544.1L571.9 547.4L572.8 545.0L573.7 548.3L574.6 548.4L575.5 551.7L576.4 546.1L577.3 549.4L578.2 546.2L579.1 549.5L580.0 545.5L580.9 548.8L581.8 548.1L582.7 551.4L583.6 547.7L584.5 551.0L585.4 545.4L586.3 548.7L587.2 543.8L588.1 547.1L589.0 543.4L589.9 546.7L590.8 546.4L591.7 549.7L592.6 545.3L593.5 548.6L594.4 545.5L595.3 548.8L596.2 543.6L597.1 546.9L598.0 547.0L598.9 550.3L599.8 547.9L600.7 551.2L601.6 548.4L602.5 551.7L603.4 545.7L604.3 549.0L605.2 544.8L606.1 548.1L607.0 546.2L607.9 549.5L608.8 546.2L609.7 549.5L610.6 545.8L611.5 549.1L612.4 542.5L613.3 545.8L614.2 544.3L615.1 547.6L616.0 545.1L616.9 548.4L617.8 548.2L618.7 551.5L619.6 546.1L620.5 549.4L621.4 545.9L622.3 549.2L623.2 545.9L624.1 549.2L625.0 547.9L625.9 551.2L626.8 548.0L627.7 551.3L628.6 545.0L629.5 548.3L630.4 544.1L631.3 547.4L632.2 543.4L633.1 546.7L634.0 546.7L634.9 550.0L635.8 545.1L636.7 548.4L637.6 545.2L638.5 548.5L639.4 543.7L640.3 547.0L641.2 547.0L642.1 550.3L643.0 548.2L643.9 551.5L644.8 548.0L645.7 551.3L646.6 545.9L647.5 549.2L648.4 544.6L649.3 547.9L650.2 546.7L651.1 550.0L652.0 546.0L652.9 549.3L653.8 545.8L654.7 549.1L655.6 542.3L656.5 545.6L657.4 544.4L658.3 547.7L659.2 545.4L660.1 548.7L661.0 547.9L661.9 551.2L662.8 546.1L663.7 549.4L664.6 545.5L665.5 548.8L666.4 546.4L667.3 549.7L668.2 547.8L669.1 551.1L670.0 548.2L670.9 551.5L671.8 544.6L672.7 547.9L673.6 544.3L674.5 547.6L675.4 543.6L676.3 546.9L677.2 546.7L678.1 550.0L679.0 545.0L679.9 548.3L680.8 544.9L681.7 548.2L682.6 543.9L683.5 547.2L684.4 546.8L685.3 550.1L686.2 548.5L687.1 551.8L688.0 547.5L688.9 550.8L689.8 546.1L690.7 549.4L691.6 544.5L692.5 547.8L693.4 547.1L694.3 550.4L695.2 545.9L696.1 549.2L697.0 545.7L697.9 549.0L698.8 542.3L699.7 545.6L700.6 544.4L701.5 547.7L702.4 545.7L703.3 549.0L704.2 547.5L705.1 550.8L706.0 546.2L706.9 549.5L707.8 545.2L708.7 548.5L709.6 546.9L710.5 550.2L711.4 547.7L712.3 551.0L713.2 548.3L714.1 551.6L715.0 544.3L715.9 547.6L716.8 544.4L717.7 547.7L718.6 543.8L719.5 547.1L720.4 546.7L721.3 550.0L722.2 545.1L723.1 548.4L724.0 544.4L724.9 547.7L725.8 544.3L726.7 547.6L727.6 546.7L728.5 550.0L729.4 548.8L730.3 552.1L731.2 547.0L732.1 550.3L733.0 546.2L733.9 549.5L734.8 544.5L735.7 547.8L736.6 547.4L737.5 550.7L738.4 546.0L739.3 549.3L740.2 545.4L741.1 548.7L742.0 542.4L742.9 545.7L743.8 544.3L744.7 547.6L745.6 546.1L746.5 549.4L747.4 547.1L748.3 550.4L749.2 546.2L750.1 549.5L751.0 544.8L751.9 548.1L752.8 547.3L753.7 550.6L754.6 547.6L755.5 550.9L756.4 548.4L757.3 551.7L758.2 544.2L759.1 547.5L760.0 544.4L760.9 547.7L761.8 544.2L762.7 547.5L763.6 546.5L764.5 549.8L765.4 545.1L766.3 548.4L767.2 543.9L768.1 547.2L769.0 544.6L769.9 547.9L770.8 546.5L771.7 549.8L772.6 549.1L773.5 552.4L774.4 546.6L775.3 549.9L776.2 546.3L777.1 549.6L778.0 544.7L778.9 548.0L779.8 547.6L780.7 550.9L781.6 546.1L782.5 549.4L783.4 545.0L784.3 548.3L785.2 542.6L786.1 545.9L787.0 544.1L787.9 547.4L788.8 546.5L789.7 549.8L790.6 546.6L791.5 549.9L792.4 546.3L793.3 549.6L794.2 544.6L795.1 547.9L796.0 547.7L796.9 551.0L797.8 547.6L798.7 550.9L799.6 548.2L800.5 551.5L801.4 544.2L802.3 547.5L803.2 544.3L804.1 547.6L805.0 544.7L805.9 548.0L806.8 546.3L807.7 549.6L808.6 545.3L809.5 548.6L810.4 543.5L811.3 546.8L812.2 545.0L813.1 548.3L814.0 546.4L814.9 549.7L815.8 549.2L816.7 552.5L817.6 546.4L818.5 549.7L819.4 546.2L820.3 549.5L821.2 545.0L822.1 548.3L823.0 547.6L823.9 550.9L824.8 546.3L825.7 549.6L826.6 544.6L827.5 547.9L828.4 542.9L829.3 546.2L830.2 544.0L831.1 547.3L832.0 546.9L832.9 550.2L833.8 546.2L834.7 549.5L835.6 546.3L836.5 549.6L837.4 544.5L838.3 547.8L839.2 547.9L840.1 551.2L841.0 547.8L841.9 551.1L842.8 548.0L843.7 551.3L844.6 544.3L845.5 547.6L846.4 544.2L847.3 547.5L848.2 545.2L849.1 548.5L850.0 546.0L850.9 549.3L851.8 545.4L852.7 548.7L853.6 543.1L854.5 546.4L855.4 545.3L856.3 548.6L857.2 546.4L858.1 549.7L859.0 549.1L859.9 552.4L860.8 546.2L861.7 549.5L862.6 546.1L863.5 549.4L864.4 545.4L865.3 548.7L866.2 547.5L867.1 550.8L868.0 546.5L868.9 549.8L869.8 544.1L870.7 547.4L871.6 543.3L872.5 546.6L873.4 543.8L874.3 547.1L875.2 547.1L876.1 550.4L877.0 545.9L877.9 549.2L878.8 546.1L879.7 549.4L880.6 544.5L881.5 547.8L882.4 548.0L883.3 551.3L884.2 548.0L885.1 551.3L886.0 547.6L886.9 550.9L887.8 544.5L888.7 547.8L889.6 544.0L890.5 547.3L891.4 545.7L892.3 549.0L893.2 545.7L894.1 549.0L895.0 545.4L895.9 548.7L896.8 542.8L897.7 546.1L898.6 545.5L899.5 548.8L900.4 546.5L901.3 549.8L902.2 549.0L903.1 552.3L904.0 546.2L904.9 549.5L905.8 545.8L906.7 549.1L907.6 545.9L908.5 549.2L909.4 547.4L910.3 550.7L911.2 546.8L912.1 550.1L913.0 543.7L913.9 547.0L914.8 543.6L915.7 546.9L916.6 543.8L917.5 547.1L918.4 547.3L919.3 550.6L920.2 545.6L921.1 548.9L922.0 545.9L922.9 549.2L923.8 544.7L924.7 548.0L925.6 547.9L926.5 551.2L927.4 548.3L928.3 551.6L929.2 547.1L930.1 550.4L931.0 544.8L931.9 548.1L932.8 543.9L933.7 547.2L934.6 546.2L935.5 549.5L936.4 545.4L937.3 548.7L938.2 545.3L939.1 548.6L940.0 542.6L940.9 545.9L940.500 555.400z" fill="#3cefb0"/></svg>
<div class="a" style="left:576px;top:540.8px;width:0.8px;height:14.6px;background:#0e6e50;"></div>
<div class="a" style="left:755px;top:540.8px;width:0.8px;height:14.6px;background:#0e6e50;"></div>
<svg style="left:494px;top:542px" width="5" height="5" viewBox="0 0 5 5"><rect width="5" height="5" rx="1" fill="#cfeee2"/><path d="M1.200 1l2.600 1.500-2.600 1.500z" fill="#245"/></svg>
<svg style="left:580px;top:542px" width="5" height="5" viewBox="0 0 5 5"><rect width="5" height="5" rx="1" fill="#cfeee2"/><path d="M1.200 1l2.600 1.500-2.600 1.500z" fill="#245"/></svg>
<svg style="left:759px;top:542px" width="5" height="5" viewBox="0 0 5 5"><rect width="5" height="5" rx="1" fill="#cfeee2"/><path d="M1.200 1l2.600 1.500-2.600 1.500z" fill="#245"/></svg>
<div class="a" style="left:489px;top:414.8px;width:452.6px;height:1.9px;background:#552628;"></div>
<div class="a" style="left:617px;top:414.8px;width:13px;height:1.9px;background:#8f7d3c;"></div>
<div class="a" style="left:614.2px;top:414px;width:1px;height:176px;background:#414a58;"></div>
<svg style="left:610.500px;top:408px" width="8" height="8" viewBox="0 0 8 8"><path d="M1 0.500h6v4l-3 3-3-3z" fill="#2d8ceb"/></svg>
<svg style="left:886px;top:558px" width="5" height="14" viewBox="0 0 5 14"><path d="M2.500 1v12" stroke="#d8d8d8" stroke-width="1.200" stroke-dasharray="3 1.500"/></svg>
<div class="a" style="left:356px;top:590.8px;width:699px;height:3px;background:#202020;"></div>
<div class="a" style="left:1056px;top:416px;width:6px;height:168px;background:#333333;"></div>
<svg style="left:1055.5px;top:419.1px" width="7" height="7"><circle cx="3.500" cy="3.500" r="2.300" stroke="#c8c8c8" stroke-width="1.200" fill="#1d1d1d"/></svg>
<svg style="left:1055.5px;top:531.2px" width="7" height="7"><circle cx="3.500" cy="3.500" r="2.300" stroke="#c8c8c8" stroke-width="1.200" fill="#1d1d1d"/></svg>
<svg style="left:1055.5px;top:540.8px" width="7" height="7"><circle cx="3.500" cy="3.500" r="2.300" stroke="#c8c8c8" stroke-width="1.200" fill="#1d1d1d"/></svg>
<svg style="left:1055.5px;top:583.5px" width="7" height="7"><circle cx="3.500" cy="3.500" r="2.300" stroke="#c8c8c8" stroke-width="1.200" fill="#1d1d1d"/></svg>
<div class="a" style="left:366px;top:592px;width:298px;height:5px;background:#343434;border-radius:2.500px"></div>
<svg style="left:359.5px;top:590.8px" width="7" height="7"><circle cx="3.500" cy="3.500" r="2.300" stroke="#c8c8c8" stroke-width="1.200" fill="#1d1d1d"/></svg>
<svg style="left:664.0px;top:590.8px" width="7" height="7"><circle cx="3.500" cy="3.500" r="2.300" stroke="#c8c8c8" stroke-width="1.200" fill="#1d1d1d"/></svg>
<div class="a" style="left:1070.5px;top:374.6px;width:30px;height:231px;background:#212121;"></div>
<div class="a" style="left:1079px;top:389px;width:7.3px;height:194px;background:#171717;"></div>
<div class="a" style="left:1087.5px;top:389px;width:7.3px;height:194px;background:#171717;"></div>
<div class="a" style="left:1081px;top:584.8px;width:10px;height:0.8px;background:#777;"></div>
<div class="t " style="left:1081px;top:581.5px;font-size:5px;color:#999;border:0.5px solid #666;height:6px;line-height:6px;width:5px;text-align:center;top:590.500px">S</div>
<div class="t " style="left:1088.5px;top:581.5px;font-size:5px;color:#999;border:0.5px solid #666;height:6px;line-height:6px;width:5px;text-align:center;top:590.500px">S</div>
<div class="a" style="left:0px;top:606px;width:1100px;height:12px;background:#252525;"></div>
<div class="a" style="left:312px;top:616px;width:20px;height:2px;background:#6b6a52;"></div>
<div class="a" style="left:338px;top:616px;width:30px;height:2px;background:#565656;"></div>
<svg style="left:2px;top:607.500px" width="8" height="8" viewBox="0 0 8 8"><circle cx="4" cy="4" r="2.800" stroke="#aaa" stroke-width="1" fill="none"/><path d="M0.500 4h2" stroke="#aaa" stroke-width="1"/></svg>
<div class="a" style="left:901px;top:557px;font-family:'Liberation Serif',serif;font-size:50px;line-height:56px;color:#b01525;opacity:0.230;letter-spacing:3px">58codes</div>
<!--PANELS-->
</body></html>
